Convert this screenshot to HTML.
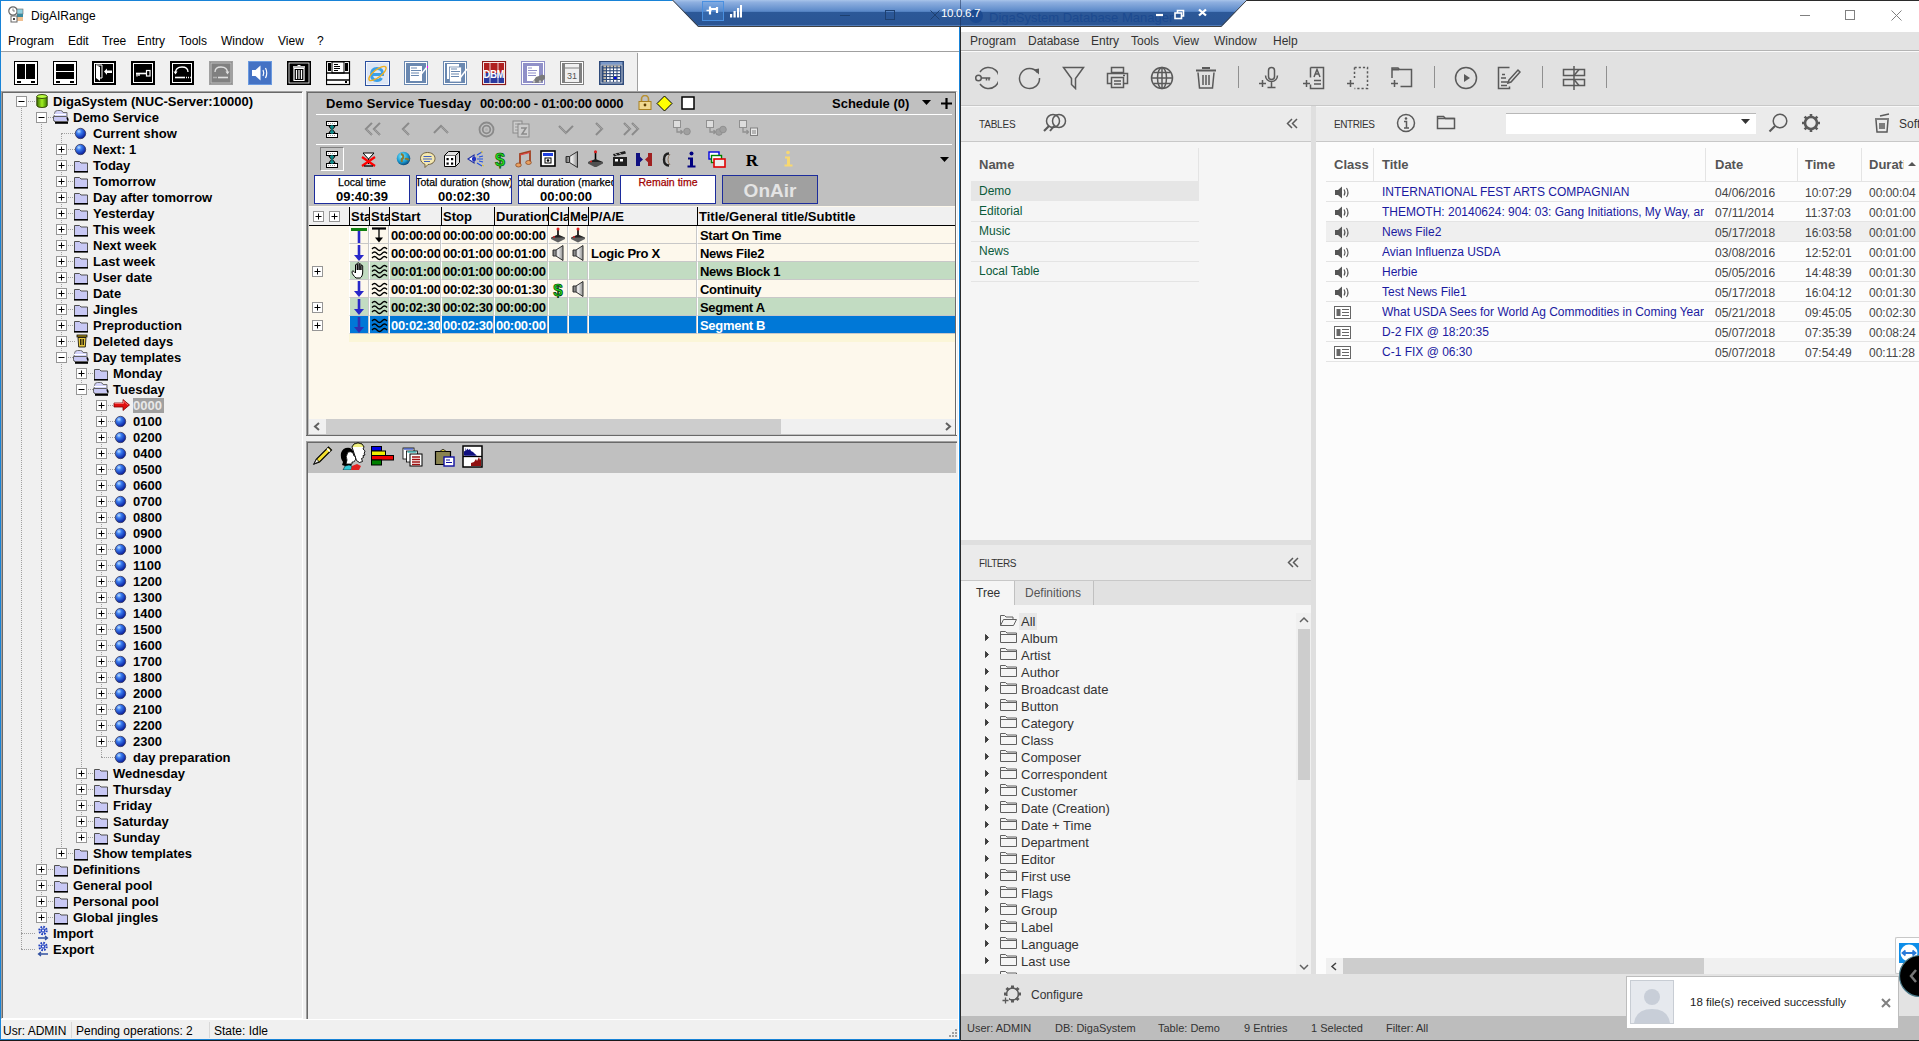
<!DOCTYPE html><html><head><meta charset="utf-8"><style>
html,body{margin:0;padding:0;}
body{width:1919px;height:1041px;overflow:hidden;position:relative;background:#fff;font-family:"Liberation Sans",sans-serif;}
div{position:absolute;box-sizing:border-box;}
.t{white-space:pre;}
</style></head><body><div style="left:0px;top:0px;width:961px;height:1041px;background:#f0f0f0;"></div><div style="left:1px;top:1px;width:959px;height:50px;background:#fff;"></div><div style="left:1px;top:51px;width:959px;height:1px;background:#a0a0a0;"></div><div style="left:1px;top:52px;width:636px;height:39px;background:#f0f0f0;"></div><div style="left:637px;top:53px;width:1px;height:38px;background:#a0a0a0;"></div><div style="left:638px;top:52px;width:321px;height:39px;background:#fff;"></div><div style="left:0px;top:0px;width:1px;height:1041px;background:#1883d7;"></div><div style="left:0px;top:0px;width:961px;height:1px;background:#1883d7;"></div><div style="left:958px;top:52px;width:1px;height:988px;background:#fff;"></div><div style="left:959px;top:0px;width:1px;height:1040px;background:#1883d7;"></div><div style="left:960px;top:0px;width:1px;height:1041px;background:#2a2a2a;"></div><div style="left:0px;top:1039px;width:960px;height:1px;background:#1883d7;"></div><div style="left:0px;top:1040px;width:960px;height:1px;background:#1a1a1a;"></div><div class="t" style="left:31px;top:9.84px;font-size:12px;line-height:12px;color:#000;">DigAIRange</div><div class="t" style="left:8px;top:34.84px;font-size:12px;line-height:12px;color:#000;">Program</div><div class="t" style="left:68px;top:34.84px;font-size:12px;line-height:12px;color:#000;">Edit</div><div class="t" style="left:102px;top:34.84px;font-size:12px;line-height:12px;color:#000;">Tree</div><div class="t" style="left:137px;top:34.84px;font-size:12px;line-height:12px;color:#000;">Entry</div><div class="t" style="left:179px;top:34.84px;font-size:12px;line-height:12px;color:#000;">Tools</div><div class="t" style="left:221px;top:34.84px;font-size:12px;line-height:12px;color:#000;">Window</div><div class="t" style="left:278px;top:34.84px;font-size:12px;line-height:12px;color:#000;">View</div><div class="t" style="left:317px;top:34.84px;font-size:12px;line-height:12px;color:#000;">?</div><div style="left:1px;top:91px;width:302px;height:928px;background:#f0f0f0;border-top:1px solid #a0a0a0;border-left:1px solid #a0a0a0;border-right:1px solid #fff;border-bottom:1px solid #fff;"></div><div style="left:2px;top:92px;width:300px;height:926px;border-top:1px solid #696969;border-left:1px solid #696969;"></div><div style="left:21px;top:101px;width:1px;height:848px;border-left:1px dotted #a0a0a0;"></div><div style="left:41px;top:117px;width:1px;height:800px;border-left:1px dotted #a0a0a0;"></div><div style="left:61px;top:133px;width:1px;height:720px;border-left:1px dotted #a0a0a0;"></div><div style="left:81px;top:373px;width:1px;height:464px;border-left:1px dotted #a0a0a0;"></div><div style="left:101px;top:405px;width:1px;height:352px;border-left:1px dotted #a0a0a0;"></div><div style="left:21px;top:101px;width:14px;height:1px;border-top:1px dotted #a0a0a0;"></div><svg style="position:absolute;left:16px;top:96px;" width="11" height="11" viewBox="0 0 11 11"><rect x="0.5" y="0.5" width="10" height="10" fill="#fff" stroke="#969696"/><path d="M2.5 5.5h6" stroke="#000" stroke-width="1"/></svg><svg style="position:absolute;left:36px;top:94px;" width="12" height="14" viewBox="0 0 12 14"><defs><linearGradient id="cg" x1="0" x2="1"><stop offset="0" stop-color="#3a6a00"/><stop offset="0.5" stop-color="#a0f020"/><stop offset="1" stop-color="#3a7a00"/></linearGradient></defs><path d="M0.8 2.5 v9 a5.2 2 0 0 0 10.4 0 v-9" fill="url(#cg)" stroke="#2a3a00" stroke-width="0.9"/><ellipse cx="6" cy="2.5" rx="5.2" ry="2" fill="#b8ff40" stroke="#2a3a00" stroke-width="0.9"/></svg><div class="t" style="left:53px;top:95.00px;font-size:13px;line-height:13px;font-weight:bold;color:#000;">DigaSystem (NUC-Server:10000)</div><div style="left:41px;top:117px;width:14px;height:1px;border-top:1px dotted #a0a0a0;"></div><svg style="position:absolute;left:36px;top:112px;" width="11" height="11" viewBox="0 0 11 11"><rect x="0.5" y="0.5" width="10" height="10" fill="#fff" stroke="#969696"/><path d="M2.5 5.5h6" stroke="#000" stroke-width="1"/></svg><svg style="position:absolute;left:52px;top:109px;" width="18" height="15" viewBox="0 0 18 15"><path d="M2.5 4.5 q0-3 3-3 h3 q2 0 2.5 2 h4 v9 h-12.5 l-1-1.5z" fill="#d4d4fa" stroke="#707070" stroke-width="1"/><path d="M1.5 7.5 h13 l1.5 2 v3 h-13.5 l-1-2z" fill="#c8c8f4" stroke="#606060" stroke-width="1"/><path d="M2 5.5h12" stroke="#fff" stroke-width="1"/><rect x="3" y="13" width="13" height="1.8" fill="#000"/><path d="M15 8.5l1 3" stroke="#000" stroke-width="1.4"/></svg><div class="t" style="left:73px;top:111.00px;font-size:13px;line-height:13px;font-weight:bold;color:#000;">Demo Service</div><div style="left:61px;top:133px;width:14px;height:1px;border-top:1px dotted #a0a0a0;"></div><svg style="position:absolute;left:74px;top:127px;" width="13" height="13" viewBox="0 0 13 13"><defs><radialGradient id="bg" cx="0.35" cy="0.3" r="0.7"><stop offset="0" stop-color="#bfe0ff"/><stop offset="0.35" stop-color="#3a7cf0"/><stop offset="1" stop-color="#0a1f9c"/></radialGradient></defs><circle cx="6.5" cy="6.5" r="5.2" fill="url(#bg)" stroke="#3a3a5a" stroke-width="0.8"/></svg><div class="t" style="left:93px;top:127.00px;font-size:13px;line-height:13px;font-weight:bold;color:#000;">Current show</div><div style="left:61px;top:149px;width:14px;height:1px;border-top:1px dotted #a0a0a0;"></div><svg style="position:absolute;left:56px;top:144px;" width="11" height="11" viewBox="0 0 11 11"><rect x="0.5" y="0.5" width="10" height="10" fill="#fff" stroke="#969696"/><path d="M2.5 5.5h6M5.5 2.5v6" stroke="#000" stroke-width="1"/></svg><svg style="position:absolute;left:74px;top:143px;" width="13" height="13" viewBox="0 0 13 13"><defs><radialGradient id="bg" cx="0.35" cy="0.3" r="0.7"><stop offset="0" stop-color="#bfe0ff"/><stop offset="0.35" stop-color="#3a7cf0"/><stop offset="1" stop-color="#0a1f9c"/></radialGradient></defs><circle cx="6.5" cy="6.5" r="5.2" fill="url(#bg)" stroke="#3a3a5a" stroke-width="0.8"/></svg><div class="t" style="left:93px;top:143.00px;font-size:13px;line-height:13px;font-weight:bold;color:#000;">Next: 1</div><div style="left:61px;top:165px;width:14px;height:1px;border-top:1px dotted #a0a0a0;"></div><svg style="position:absolute;left:56px;top:160px;" width="11" height="11" viewBox="0 0 11 11"><rect x="0.5" y="0.5" width="10" height="10" fill="#fff" stroke="#969696"/><path d="M2.5 5.5h6M5.5 2.5v6" stroke="#000" stroke-width="1"/></svg><svg style="position:absolute;left:73px;top:159px;" width="16" height="14" viewBox="0 0 16 14"><path d="M1.5 2.5 h5 l1.5 1.5 h6.5 v8.5 h-13z" fill="#c8c8f4" stroke="#505050" stroke-width="1"/><rect x="1" y="12" width="14" height="1.6" fill="#000"/></svg><div class="t" style="left:93px;top:159.00px;font-size:13px;line-height:13px;font-weight:bold;color:#000;">Today</div><div style="left:61px;top:181px;width:14px;height:1px;border-top:1px dotted #a0a0a0;"></div><svg style="position:absolute;left:56px;top:176px;" width="11" height="11" viewBox="0 0 11 11"><rect x="0.5" y="0.5" width="10" height="10" fill="#fff" stroke="#969696"/><path d="M2.5 5.5h6M5.5 2.5v6" stroke="#000" stroke-width="1"/></svg><svg style="position:absolute;left:73px;top:175px;" width="16" height="14" viewBox="0 0 16 14"><path d="M1.5 2.5 h5 l1.5 1.5 h6.5 v8.5 h-13z" fill="#c8c8f4" stroke="#505050" stroke-width="1"/><rect x="1" y="12" width="14" height="1.6" fill="#000"/></svg><div class="t" style="left:93px;top:175.00px;font-size:13px;line-height:13px;font-weight:bold;color:#000;">Tomorrow</div><div style="left:61px;top:197px;width:14px;height:1px;border-top:1px dotted #a0a0a0;"></div><svg style="position:absolute;left:56px;top:192px;" width="11" height="11" viewBox="0 0 11 11"><rect x="0.5" y="0.5" width="10" height="10" fill="#fff" stroke="#969696"/><path d="M2.5 5.5h6M5.5 2.5v6" stroke="#000" stroke-width="1"/></svg><svg style="position:absolute;left:73px;top:191px;" width="16" height="14" viewBox="0 0 16 14"><path d="M1.5 2.5 h5 l1.5 1.5 h6.5 v8.5 h-13z" fill="#c8c8f4" stroke="#505050" stroke-width="1"/><rect x="1" y="12" width="14" height="1.6" fill="#000"/></svg><div class="t" style="left:93px;top:191.00px;font-size:13px;line-height:13px;font-weight:bold;color:#000;">Day after tomorrow</div><div style="left:61px;top:213px;width:14px;height:1px;border-top:1px dotted #a0a0a0;"></div><svg style="position:absolute;left:56px;top:208px;" width="11" height="11" viewBox="0 0 11 11"><rect x="0.5" y="0.5" width="10" height="10" fill="#fff" stroke="#969696"/><path d="M2.5 5.5h6M5.5 2.5v6" stroke="#000" stroke-width="1"/></svg><svg style="position:absolute;left:73px;top:207px;" width="16" height="14" viewBox="0 0 16 14"><path d="M1.5 2.5 h5 l1.5 1.5 h6.5 v8.5 h-13z" fill="#c8c8f4" stroke="#505050" stroke-width="1"/><rect x="1" y="12" width="14" height="1.6" fill="#000"/></svg><div class="t" style="left:93px;top:207.00px;font-size:13px;line-height:13px;font-weight:bold;color:#000;">Yesterday</div><div style="left:61px;top:229px;width:14px;height:1px;border-top:1px dotted #a0a0a0;"></div><svg style="position:absolute;left:56px;top:224px;" width="11" height="11" viewBox="0 0 11 11"><rect x="0.5" y="0.5" width="10" height="10" fill="#fff" stroke="#969696"/><path d="M2.5 5.5h6M5.5 2.5v6" stroke="#000" stroke-width="1"/></svg><svg style="position:absolute;left:73px;top:223px;" width="16" height="14" viewBox="0 0 16 14"><path d="M1.5 2.5 h5 l1.5 1.5 h6.5 v8.5 h-13z" fill="#c8c8f4" stroke="#505050" stroke-width="1"/><rect x="1" y="12" width="14" height="1.6" fill="#000"/></svg><div class="t" style="left:93px;top:223.00px;font-size:13px;line-height:13px;font-weight:bold;color:#000;">This week</div><div style="left:61px;top:245px;width:14px;height:1px;border-top:1px dotted #a0a0a0;"></div><svg style="position:absolute;left:56px;top:240px;" width="11" height="11" viewBox="0 0 11 11"><rect x="0.5" y="0.5" width="10" height="10" fill="#fff" stroke="#969696"/><path d="M2.5 5.5h6M5.5 2.5v6" stroke="#000" stroke-width="1"/></svg><svg style="position:absolute;left:73px;top:239px;" width="16" height="14" viewBox="0 0 16 14"><path d="M1.5 2.5 h5 l1.5 1.5 h6.5 v8.5 h-13z" fill="#c8c8f4" stroke="#505050" stroke-width="1"/><rect x="1" y="12" width="14" height="1.6" fill="#000"/></svg><div class="t" style="left:93px;top:239.00px;font-size:13px;line-height:13px;font-weight:bold;color:#000;">Next week</div><div style="left:61px;top:261px;width:14px;height:1px;border-top:1px dotted #a0a0a0;"></div><svg style="position:absolute;left:56px;top:256px;" width="11" height="11" viewBox="0 0 11 11"><rect x="0.5" y="0.5" width="10" height="10" fill="#fff" stroke="#969696"/><path d="M2.5 5.5h6M5.5 2.5v6" stroke="#000" stroke-width="1"/></svg><svg style="position:absolute;left:73px;top:255px;" width="16" height="14" viewBox="0 0 16 14"><path d="M1.5 2.5 h5 l1.5 1.5 h6.5 v8.5 h-13z" fill="#c8c8f4" stroke="#505050" stroke-width="1"/><rect x="1" y="12" width="14" height="1.6" fill="#000"/></svg><div class="t" style="left:93px;top:255.00px;font-size:13px;line-height:13px;font-weight:bold;color:#000;">Last week</div><div style="left:61px;top:277px;width:14px;height:1px;border-top:1px dotted #a0a0a0;"></div><svg style="position:absolute;left:56px;top:272px;" width="11" height="11" viewBox="0 0 11 11"><rect x="0.5" y="0.5" width="10" height="10" fill="#fff" stroke="#969696"/><path d="M2.5 5.5h6M5.5 2.5v6" stroke="#000" stroke-width="1"/></svg><svg style="position:absolute;left:73px;top:271px;" width="16" height="14" viewBox="0 0 16 14"><path d="M1.5 2.5 h5 l1.5 1.5 h6.5 v8.5 h-13z" fill="#c8c8f4" stroke="#505050" stroke-width="1"/><rect x="1" y="12" width="14" height="1.6" fill="#000"/></svg><div class="t" style="left:93px;top:271.00px;font-size:13px;line-height:13px;font-weight:bold;color:#000;">User date</div><div style="left:61px;top:293px;width:14px;height:1px;border-top:1px dotted #a0a0a0;"></div><svg style="position:absolute;left:56px;top:288px;" width="11" height="11" viewBox="0 0 11 11"><rect x="0.5" y="0.5" width="10" height="10" fill="#fff" stroke="#969696"/><path d="M2.5 5.5h6M5.5 2.5v6" stroke="#000" stroke-width="1"/></svg><svg style="position:absolute;left:73px;top:287px;" width="16" height="14" viewBox="0 0 16 14"><path d="M1.5 2.5 h5 l1.5 1.5 h6.5 v8.5 h-13z" fill="#c8c8f4" stroke="#505050" stroke-width="1"/><rect x="1" y="12" width="14" height="1.6" fill="#000"/></svg><div class="t" style="left:93px;top:287.00px;font-size:13px;line-height:13px;font-weight:bold;color:#000;">Date</div><div style="left:61px;top:309px;width:14px;height:1px;border-top:1px dotted #a0a0a0;"></div><svg style="position:absolute;left:56px;top:304px;" width="11" height="11" viewBox="0 0 11 11"><rect x="0.5" y="0.5" width="10" height="10" fill="#fff" stroke="#969696"/><path d="M2.5 5.5h6M5.5 2.5v6" stroke="#000" stroke-width="1"/></svg><svg style="position:absolute;left:73px;top:303px;" width="16" height="14" viewBox="0 0 16 14"><path d="M1.5 2.5 h5 l1.5 1.5 h6.5 v8.5 h-13z" fill="#c8c8f4" stroke="#505050" stroke-width="1"/><rect x="1" y="12" width="14" height="1.6" fill="#000"/></svg><div class="t" style="left:93px;top:303.00px;font-size:13px;line-height:13px;font-weight:bold;color:#000;">Jingles</div><div style="left:61px;top:325px;width:14px;height:1px;border-top:1px dotted #a0a0a0;"></div><svg style="position:absolute;left:56px;top:320px;" width="11" height="11" viewBox="0 0 11 11"><rect x="0.5" y="0.5" width="10" height="10" fill="#fff" stroke="#969696"/><path d="M2.5 5.5h6M5.5 2.5v6" stroke="#000" stroke-width="1"/></svg><svg style="position:absolute;left:73px;top:319px;" width="16" height="14" viewBox="0 0 16 14"><path d="M1.5 2.5 h5 l1.5 1.5 h6.5 v8.5 h-13z" fill="#c8c8f4" stroke="#505050" stroke-width="1"/><rect x="1" y="12" width="14" height="1.6" fill="#000"/></svg><div class="t" style="left:93px;top:319.00px;font-size:13px;line-height:13px;font-weight:bold;color:#000;">Preproduction</div><div style="left:61px;top:341px;width:14px;height:1px;border-top:1px dotted #a0a0a0;"></div><svg style="position:absolute;left:56px;top:336px;" width="11" height="11" viewBox="0 0 11 11"><rect x="0.5" y="0.5" width="10" height="10" fill="#fff" stroke="#969696"/><path d="M2.5 5.5h6M5.5 2.5v6" stroke="#000" stroke-width="1"/></svg><svg style="position:absolute;left:76px;top:334px;" width="12" height="14" viewBox="0 0 12 14"><rect x="1" y="1" width="10" height="2" fill="#c0a020" stroke="#000" stroke-width="0.8"/><path d="M2 3.5 h8 l-0.7 9.5 h-6.6z" fill="#e8c840" stroke="#000" stroke-width="0.8"/><path d="M4.5 5v6M6 5v6M7.5 5v6" stroke="#000" stroke-width="0.8"/></svg><div class="t" style="left:93px;top:335.00px;font-size:13px;line-height:13px;font-weight:bold;color:#000;">Deleted days</div><div style="left:61px;top:357px;width:14px;height:1px;border-top:1px dotted #a0a0a0;"></div><svg style="position:absolute;left:56px;top:352px;" width="11" height="11" viewBox="0 0 11 11"><rect x="0.5" y="0.5" width="10" height="10" fill="#fff" stroke="#969696"/><path d="M2.5 5.5h6" stroke="#000" stroke-width="1"/></svg><svg style="position:absolute;left:72px;top:349px;" width="18" height="15" viewBox="0 0 18 15"><path d="M2.5 4.5 q0-3 3-3 h3 q2 0 2.5 2 h4 v9 h-12.5 l-1-1.5z" fill="#d4d4fa" stroke="#707070" stroke-width="1"/><path d="M1.5 7.5 h13 l1.5 2 v3 h-13.5 l-1-2z" fill="#c8c8f4" stroke="#606060" stroke-width="1"/><path d="M2 5.5h12" stroke="#fff" stroke-width="1"/><rect x="3" y="13" width="13" height="1.8" fill="#000"/><path d="M15 8.5l1 3" stroke="#000" stroke-width="1.4"/></svg><div class="t" style="left:93px;top:351.00px;font-size:13px;line-height:13px;font-weight:bold;color:#000;">Day templates</div><div style="left:81px;top:373px;width:14px;height:1px;border-top:1px dotted #a0a0a0;"></div><svg style="position:absolute;left:76px;top:368px;" width="11" height="11" viewBox="0 0 11 11"><rect x="0.5" y="0.5" width="10" height="10" fill="#fff" stroke="#969696"/><path d="M2.5 5.5h6M5.5 2.5v6" stroke="#000" stroke-width="1"/></svg><svg style="position:absolute;left:93px;top:367px;" width="16" height="14" viewBox="0 0 16 14"><path d="M1.5 2.5 h5 l1.5 1.5 h6.5 v8.5 h-13z" fill="#c8c8f4" stroke="#505050" stroke-width="1"/><rect x="1" y="12" width="14" height="1.6" fill="#000"/></svg><div class="t" style="left:113px;top:367.00px;font-size:13px;line-height:13px;font-weight:bold;color:#000;">Monday</div><div style="left:81px;top:389px;width:14px;height:1px;border-top:1px dotted #a0a0a0;"></div><svg style="position:absolute;left:76px;top:384px;" width="11" height="11" viewBox="0 0 11 11"><rect x="0.5" y="0.5" width="10" height="10" fill="#fff" stroke="#969696"/><path d="M2.5 5.5h6" stroke="#000" stroke-width="1"/></svg><svg style="position:absolute;left:92px;top:381px;" width="18" height="15" viewBox="0 0 18 15"><path d="M2.5 4.5 q0-3 3-3 h3 q2 0 2.5 2 h4 v9 h-12.5 l-1-1.5z" fill="#d4d4fa" stroke="#707070" stroke-width="1"/><path d="M1.5 7.5 h13 l1.5 2 v3 h-13.5 l-1-2z" fill="#c8c8f4" stroke="#606060" stroke-width="1"/><path d="M2 5.5h12" stroke="#fff" stroke-width="1"/><rect x="3" y="13" width="13" height="1.8" fill="#000"/><path d="M15 8.5l1 3" stroke="#000" stroke-width="1.4"/></svg><div class="t" style="left:113px;top:383.00px;font-size:13px;line-height:13px;font-weight:bold;color:#000;">Tuesday</div><div style="left:101px;top:405px;width:14px;height:1px;border-top:1px dotted #a0a0a0;"></div><svg style="position:absolute;left:96px;top:400px;" width="11" height="11" viewBox="0 0 11 11"><rect x="0.5" y="0.5" width="10" height="10" fill="#fff" stroke="#969696"/><path d="M2.5 5.5h6M5.5 2.5v6" stroke="#000" stroke-width="1"/></svg><svg style="position:absolute;left:113px;top:399px;" width="18" height="12" viewBox="0 0 18 12"><path d="M1 4 h9 v-3.5 l6.5 5.5 l-6.5 5.5 v-3.5 h-9z" fill="#e01010" stroke="#800000" stroke-width="0.8"/><path d="M1.5 4.5 h9 v-2.5 l4.5 4" fill="none" stroke="#ff8080" stroke-width="0.8"/></svg><div style="left:133px;top:398px;width:31px;height:15px;background:#a0a0a0;"></div><div class="t" style="left:133px;top:399.00px;font-size:13px;line-height:13px;font-weight:bold;color:#e8e8e8;">0000</div><div style="left:101px;top:421px;width:14px;height:1px;border-top:1px dotted #a0a0a0;"></div><svg style="position:absolute;left:96px;top:416px;" width="11" height="11" viewBox="0 0 11 11"><rect x="0.5" y="0.5" width="10" height="10" fill="#fff" stroke="#969696"/><path d="M2.5 5.5h6M5.5 2.5v6" stroke="#000" stroke-width="1"/></svg><svg style="position:absolute;left:114px;top:415px;" width="13" height="13" viewBox="0 0 13 13"><defs><radialGradient id="bg" cx="0.35" cy="0.3" r="0.7"><stop offset="0" stop-color="#bfe0ff"/><stop offset="0.35" stop-color="#3a7cf0"/><stop offset="1" stop-color="#0a1f9c"/></radialGradient></defs><circle cx="6.5" cy="6.5" r="5.2" fill="url(#bg)" stroke="#3a3a5a" stroke-width="0.8"/></svg><div class="t" style="left:133px;top:415.00px;font-size:13px;line-height:13px;font-weight:bold;color:#000;">0100</div><div style="left:101px;top:437px;width:14px;height:1px;border-top:1px dotted #a0a0a0;"></div><svg style="position:absolute;left:96px;top:432px;" width="11" height="11" viewBox="0 0 11 11"><rect x="0.5" y="0.5" width="10" height="10" fill="#fff" stroke="#969696"/><path d="M2.5 5.5h6M5.5 2.5v6" stroke="#000" stroke-width="1"/></svg><svg style="position:absolute;left:114px;top:431px;" width="13" height="13" viewBox="0 0 13 13"><defs><radialGradient id="bg" cx="0.35" cy="0.3" r="0.7"><stop offset="0" stop-color="#bfe0ff"/><stop offset="0.35" stop-color="#3a7cf0"/><stop offset="1" stop-color="#0a1f9c"/></radialGradient></defs><circle cx="6.5" cy="6.5" r="5.2" fill="url(#bg)" stroke="#3a3a5a" stroke-width="0.8"/></svg><div class="t" style="left:133px;top:431.00px;font-size:13px;line-height:13px;font-weight:bold;color:#000;">0200</div><div style="left:101px;top:453px;width:14px;height:1px;border-top:1px dotted #a0a0a0;"></div><svg style="position:absolute;left:96px;top:448px;" width="11" height="11" viewBox="0 0 11 11"><rect x="0.5" y="0.5" width="10" height="10" fill="#fff" stroke="#969696"/><path d="M2.5 5.5h6M5.5 2.5v6" stroke="#000" stroke-width="1"/></svg><svg style="position:absolute;left:114px;top:447px;" width="13" height="13" viewBox="0 0 13 13"><defs><radialGradient id="bg" cx="0.35" cy="0.3" r="0.7"><stop offset="0" stop-color="#bfe0ff"/><stop offset="0.35" stop-color="#3a7cf0"/><stop offset="1" stop-color="#0a1f9c"/></radialGradient></defs><circle cx="6.5" cy="6.5" r="5.2" fill="url(#bg)" stroke="#3a3a5a" stroke-width="0.8"/></svg><div class="t" style="left:133px;top:447.00px;font-size:13px;line-height:13px;font-weight:bold;color:#000;">0400</div><div style="left:101px;top:469px;width:14px;height:1px;border-top:1px dotted #a0a0a0;"></div><svg style="position:absolute;left:96px;top:464px;" width="11" height="11" viewBox="0 0 11 11"><rect x="0.5" y="0.5" width="10" height="10" fill="#fff" stroke="#969696"/><path d="M2.5 5.5h6M5.5 2.5v6" stroke="#000" stroke-width="1"/></svg><svg style="position:absolute;left:114px;top:463px;" width="13" height="13" viewBox="0 0 13 13"><defs><radialGradient id="bg" cx="0.35" cy="0.3" r="0.7"><stop offset="0" stop-color="#bfe0ff"/><stop offset="0.35" stop-color="#3a7cf0"/><stop offset="1" stop-color="#0a1f9c"/></radialGradient></defs><circle cx="6.5" cy="6.5" r="5.2" fill="url(#bg)" stroke="#3a3a5a" stroke-width="0.8"/></svg><div class="t" style="left:133px;top:463.00px;font-size:13px;line-height:13px;font-weight:bold;color:#000;">0500</div><div style="left:101px;top:485px;width:14px;height:1px;border-top:1px dotted #a0a0a0;"></div><svg style="position:absolute;left:96px;top:480px;" width="11" height="11" viewBox="0 0 11 11"><rect x="0.5" y="0.5" width="10" height="10" fill="#fff" stroke="#969696"/><path d="M2.5 5.5h6M5.5 2.5v6" stroke="#000" stroke-width="1"/></svg><svg style="position:absolute;left:114px;top:479px;" width="13" height="13" viewBox="0 0 13 13"><defs><radialGradient id="bg" cx="0.35" cy="0.3" r="0.7"><stop offset="0" stop-color="#bfe0ff"/><stop offset="0.35" stop-color="#3a7cf0"/><stop offset="1" stop-color="#0a1f9c"/></radialGradient></defs><circle cx="6.5" cy="6.5" r="5.2" fill="url(#bg)" stroke="#3a3a5a" stroke-width="0.8"/></svg><div class="t" style="left:133px;top:479.00px;font-size:13px;line-height:13px;font-weight:bold;color:#000;">0600</div><div style="left:101px;top:501px;width:14px;height:1px;border-top:1px dotted #a0a0a0;"></div><svg style="position:absolute;left:96px;top:496px;" width="11" height="11" viewBox="0 0 11 11"><rect x="0.5" y="0.5" width="10" height="10" fill="#fff" stroke="#969696"/><path d="M2.5 5.5h6M5.5 2.5v6" stroke="#000" stroke-width="1"/></svg><svg style="position:absolute;left:114px;top:495px;" width="13" height="13" viewBox="0 0 13 13"><defs><radialGradient id="bg" cx="0.35" cy="0.3" r="0.7"><stop offset="0" stop-color="#bfe0ff"/><stop offset="0.35" stop-color="#3a7cf0"/><stop offset="1" stop-color="#0a1f9c"/></radialGradient></defs><circle cx="6.5" cy="6.5" r="5.2" fill="url(#bg)" stroke="#3a3a5a" stroke-width="0.8"/></svg><div class="t" style="left:133px;top:495.00px;font-size:13px;line-height:13px;font-weight:bold;color:#000;">0700</div><div style="left:101px;top:517px;width:14px;height:1px;border-top:1px dotted #a0a0a0;"></div><svg style="position:absolute;left:96px;top:512px;" width="11" height="11" viewBox="0 0 11 11"><rect x="0.5" y="0.5" width="10" height="10" fill="#fff" stroke="#969696"/><path d="M2.5 5.5h6M5.5 2.5v6" stroke="#000" stroke-width="1"/></svg><svg style="position:absolute;left:114px;top:511px;" width="13" height="13" viewBox="0 0 13 13"><defs><radialGradient id="bg" cx="0.35" cy="0.3" r="0.7"><stop offset="0" stop-color="#bfe0ff"/><stop offset="0.35" stop-color="#3a7cf0"/><stop offset="1" stop-color="#0a1f9c"/></radialGradient></defs><circle cx="6.5" cy="6.5" r="5.2" fill="url(#bg)" stroke="#3a3a5a" stroke-width="0.8"/></svg><div class="t" style="left:133px;top:511.00px;font-size:13px;line-height:13px;font-weight:bold;color:#000;">0800</div><div style="left:101px;top:533px;width:14px;height:1px;border-top:1px dotted #a0a0a0;"></div><svg style="position:absolute;left:96px;top:528px;" width="11" height="11" viewBox="0 0 11 11"><rect x="0.5" y="0.5" width="10" height="10" fill="#fff" stroke="#969696"/><path d="M2.5 5.5h6M5.5 2.5v6" stroke="#000" stroke-width="1"/></svg><svg style="position:absolute;left:114px;top:527px;" width="13" height="13" viewBox="0 0 13 13"><defs><radialGradient id="bg" cx="0.35" cy="0.3" r="0.7"><stop offset="0" stop-color="#bfe0ff"/><stop offset="0.35" stop-color="#3a7cf0"/><stop offset="1" stop-color="#0a1f9c"/></radialGradient></defs><circle cx="6.5" cy="6.5" r="5.2" fill="url(#bg)" stroke="#3a3a5a" stroke-width="0.8"/></svg><div class="t" style="left:133px;top:527.00px;font-size:13px;line-height:13px;font-weight:bold;color:#000;">0900</div><div style="left:101px;top:549px;width:14px;height:1px;border-top:1px dotted #a0a0a0;"></div><svg style="position:absolute;left:96px;top:544px;" width="11" height="11" viewBox="0 0 11 11"><rect x="0.5" y="0.5" width="10" height="10" fill="#fff" stroke="#969696"/><path d="M2.5 5.5h6M5.5 2.5v6" stroke="#000" stroke-width="1"/></svg><svg style="position:absolute;left:114px;top:543px;" width="13" height="13" viewBox="0 0 13 13"><defs><radialGradient id="bg" cx="0.35" cy="0.3" r="0.7"><stop offset="0" stop-color="#bfe0ff"/><stop offset="0.35" stop-color="#3a7cf0"/><stop offset="1" stop-color="#0a1f9c"/></radialGradient></defs><circle cx="6.5" cy="6.5" r="5.2" fill="url(#bg)" stroke="#3a3a5a" stroke-width="0.8"/></svg><div class="t" style="left:133px;top:543.00px;font-size:13px;line-height:13px;font-weight:bold;color:#000;">1000</div><div style="left:101px;top:565px;width:14px;height:1px;border-top:1px dotted #a0a0a0;"></div><svg style="position:absolute;left:96px;top:560px;" width="11" height="11" viewBox="0 0 11 11"><rect x="0.5" y="0.5" width="10" height="10" fill="#fff" stroke="#969696"/><path d="M2.5 5.5h6M5.5 2.5v6" stroke="#000" stroke-width="1"/></svg><svg style="position:absolute;left:114px;top:559px;" width="13" height="13" viewBox="0 0 13 13"><defs><radialGradient id="bg" cx="0.35" cy="0.3" r="0.7"><stop offset="0" stop-color="#bfe0ff"/><stop offset="0.35" stop-color="#3a7cf0"/><stop offset="1" stop-color="#0a1f9c"/></radialGradient></defs><circle cx="6.5" cy="6.5" r="5.2" fill="url(#bg)" stroke="#3a3a5a" stroke-width="0.8"/></svg><div class="t" style="left:133px;top:559.00px;font-size:13px;line-height:13px;font-weight:bold;color:#000;">1100</div><div style="left:101px;top:581px;width:14px;height:1px;border-top:1px dotted #a0a0a0;"></div><svg style="position:absolute;left:96px;top:576px;" width="11" height="11" viewBox="0 0 11 11"><rect x="0.5" y="0.5" width="10" height="10" fill="#fff" stroke="#969696"/><path d="M2.5 5.5h6M5.5 2.5v6" stroke="#000" stroke-width="1"/></svg><svg style="position:absolute;left:114px;top:575px;" width="13" height="13" viewBox="0 0 13 13"><defs><radialGradient id="bg" cx="0.35" cy="0.3" r="0.7"><stop offset="0" stop-color="#bfe0ff"/><stop offset="0.35" stop-color="#3a7cf0"/><stop offset="1" stop-color="#0a1f9c"/></radialGradient></defs><circle cx="6.5" cy="6.5" r="5.2" fill="url(#bg)" stroke="#3a3a5a" stroke-width="0.8"/></svg><div class="t" style="left:133px;top:575.00px;font-size:13px;line-height:13px;font-weight:bold;color:#000;">1200</div><div style="left:101px;top:597px;width:14px;height:1px;border-top:1px dotted #a0a0a0;"></div><svg style="position:absolute;left:96px;top:592px;" width="11" height="11" viewBox="0 0 11 11"><rect x="0.5" y="0.5" width="10" height="10" fill="#fff" stroke="#969696"/><path d="M2.5 5.5h6M5.5 2.5v6" stroke="#000" stroke-width="1"/></svg><svg style="position:absolute;left:114px;top:591px;" width="13" height="13" viewBox="0 0 13 13"><defs><radialGradient id="bg" cx="0.35" cy="0.3" r="0.7"><stop offset="0" stop-color="#bfe0ff"/><stop offset="0.35" stop-color="#3a7cf0"/><stop offset="1" stop-color="#0a1f9c"/></radialGradient></defs><circle cx="6.5" cy="6.5" r="5.2" fill="url(#bg)" stroke="#3a3a5a" stroke-width="0.8"/></svg><div class="t" style="left:133px;top:591.00px;font-size:13px;line-height:13px;font-weight:bold;color:#000;">1300</div><div style="left:101px;top:613px;width:14px;height:1px;border-top:1px dotted #a0a0a0;"></div><svg style="position:absolute;left:96px;top:608px;" width="11" height="11" viewBox="0 0 11 11"><rect x="0.5" y="0.5" width="10" height="10" fill="#fff" stroke="#969696"/><path d="M2.5 5.5h6M5.5 2.5v6" stroke="#000" stroke-width="1"/></svg><svg style="position:absolute;left:114px;top:607px;" width="13" height="13" viewBox="0 0 13 13"><defs><radialGradient id="bg" cx="0.35" cy="0.3" r="0.7"><stop offset="0" stop-color="#bfe0ff"/><stop offset="0.35" stop-color="#3a7cf0"/><stop offset="1" stop-color="#0a1f9c"/></radialGradient></defs><circle cx="6.5" cy="6.5" r="5.2" fill="url(#bg)" stroke="#3a3a5a" stroke-width="0.8"/></svg><div class="t" style="left:133px;top:607.00px;font-size:13px;line-height:13px;font-weight:bold;color:#000;">1400</div><div style="left:101px;top:629px;width:14px;height:1px;border-top:1px dotted #a0a0a0;"></div><svg style="position:absolute;left:96px;top:624px;" width="11" height="11" viewBox="0 0 11 11"><rect x="0.5" y="0.5" width="10" height="10" fill="#fff" stroke="#969696"/><path d="M2.5 5.5h6M5.5 2.5v6" stroke="#000" stroke-width="1"/></svg><svg style="position:absolute;left:114px;top:623px;" width="13" height="13" viewBox="0 0 13 13"><defs><radialGradient id="bg" cx="0.35" cy="0.3" r="0.7"><stop offset="0" stop-color="#bfe0ff"/><stop offset="0.35" stop-color="#3a7cf0"/><stop offset="1" stop-color="#0a1f9c"/></radialGradient></defs><circle cx="6.5" cy="6.5" r="5.2" fill="url(#bg)" stroke="#3a3a5a" stroke-width="0.8"/></svg><div class="t" style="left:133px;top:623.00px;font-size:13px;line-height:13px;font-weight:bold;color:#000;">1500</div><div style="left:101px;top:645px;width:14px;height:1px;border-top:1px dotted #a0a0a0;"></div><svg style="position:absolute;left:96px;top:640px;" width="11" height="11" viewBox="0 0 11 11"><rect x="0.5" y="0.5" width="10" height="10" fill="#fff" stroke="#969696"/><path d="M2.5 5.5h6M5.5 2.5v6" stroke="#000" stroke-width="1"/></svg><svg style="position:absolute;left:114px;top:639px;" width="13" height="13" viewBox="0 0 13 13"><defs><radialGradient id="bg" cx="0.35" cy="0.3" r="0.7"><stop offset="0" stop-color="#bfe0ff"/><stop offset="0.35" stop-color="#3a7cf0"/><stop offset="1" stop-color="#0a1f9c"/></radialGradient></defs><circle cx="6.5" cy="6.5" r="5.2" fill="url(#bg)" stroke="#3a3a5a" stroke-width="0.8"/></svg><div class="t" style="left:133px;top:639.00px;font-size:13px;line-height:13px;font-weight:bold;color:#000;">1600</div><div style="left:101px;top:661px;width:14px;height:1px;border-top:1px dotted #a0a0a0;"></div><svg style="position:absolute;left:96px;top:656px;" width="11" height="11" viewBox="0 0 11 11"><rect x="0.5" y="0.5" width="10" height="10" fill="#fff" stroke="#969696"/><path d="M2.5 5.5h6M5.5 2.5v6" stroke="#000" stroke-width="1"/></svg><svg style="position:absolute;left:114px;top:655px;" width="13" height="13" viewBox="0 0 13 13"><defs><radialGradient id="bg" cx="0.35" cy="0.3" r="0.7"><stop offset="0" stop-color="#bfe0ff"/><stop offset="0.35" stop-color="#3a7cf0"/><stop offset="1" stop-color="#0a1f9c"/></radialGradient></defs><circle cx="6.5" cy="6.5" r="5.2" fill="url(#bg)" stroke="#3a3a5a" stroke-width="0.8"/></svg><div class="t" style="left:133px;top:655.00px;font-size:13px;line-height:13px;font-weight:bold;color:#000;">1700</div><div style="left:101px;top:677px;width:14px;height:1px;border-top:1px dotted #a0a0a0;"></div><svg style="position:absolute;left:96px;top:672px;" width="11" height="11" viewBox="0 0 11 11"><rect x="0.5" y="0.5" width="10" height="10" fill="#fff" stroke="#969696"/><path d="M2.5 5.5h6M5.5 2.5v6" stroke="#000" stroke-width="1"/></svg><svg style="position:absolute;left:114px;top:671px;" width="13" height="13" viewBox="0 0 13 13"><defs><radialGradient id="bg" cx="0.35" cy="0.3" r="0.7"><stop offset="0" stop-color="#bfe0ff"/><stop offset="0.35" stop-color="#3a7cf0"/><stop offset="1" stop-color="#0a1f9c"/></radialGradient></defs><circle cx="6.5" cy="6.5" r="5.2" fill="url(#bg)" stroke="#3a3a5a" stroke-width="0.8"/></svg><div class="t" style="left:133px;top:671.00px;font-size:13px;line-height:13px;font-weight:bold;color:#000;">1800</div><div style="left:101px;top:693px;width:14px;height:1px;border-top:1px dotted #a0a0a0;"></div><svg style="position:absolute;left:96px;top:688px;" width="11" height="11" viewBox="0 0 11 11"><rect x="0.5" y="0.5" width="10" height="10" fill="#fff" stroke="#969696"/><path d="M2.5 5.5h6M5.5 2.5v6" stroke="#000" stroke-width="1"/></svg><svg style="position:absolute;left:114px;top:687px;" width="13" height="13" viewBox="0 0 13 13"><defs><radialGradient id="bg" cx="0.35" cy="0.3" r="0.7"><stop offset="0" stop-color="#bfe0ff"/><stop offset="0.35" stop-color="#3a7cf0"/><stop offset="1" stop-color="#0a1f9c"/></radialGradient></defs><circle cx="6.5" cy="6.5" r="5.2" fill="url(#bg)" stroke="#3a3a5a" stroke-width="0.8"/></svg><div class="t" style="left:133px;top:687.00px;font-size:13px;line-height:13px;font-weight:bold;color:#000;">2000</div><div style="left:101px;top:709px;width:14px;height:1px;border-top:1px dotted #a0a0a0;"></div><svg style="position:absolute;left:96px;top:704px;" width="11" height="11" viewBox="0 0 11 11"><rect x="0.5" y="0.5" width="10" height="10" fill="#fff" stroke="#969696"/><path d="M2.5 5.5h6M5.5 2.5v6" stroke="#000" stroke-width="1"/></svg><svg style="position:absolute;left:114px;top:703px;" width="13" height="13" viewBox="0 0 13 13"><defs><radialGradient id="bg" cx="0.35" cy="0.3" r="0.7"><stop offset="0" stop-color="#bfe0ff"/><stop offset="0.35" stop-color="#3a7cf0"/><stop offset="1" stop-color="#0a1f9c"/></radialGradient></defs><circle cx="6.5" cy="6.5" r="5.2" fill="url(#bg)" stroke="#3a3a5a" stroke-width="0.8"/></svg><div class="t" style="left:133px;top:703.00px;font-size:13px;line-height:13px;font-weight:bold;color:#000;">2100</div><div style="left:101px;top:725px;width:14px;height:1px;border-top:1px dotted #a0a0a0;"></div><svg style="position:absolute;left:96px;top:720px;" width="11" height="11" viewBox="0 0 11 11"><rect x="0.5" y="0.5" width="10" height="10" fill="#fff" stroke="#969696"/><path d="M2.5 5.5h6M5.5 2.5v6" stroke="#000" stroke-width="1"/></svg><svg style="position:absolute;left:114px;top:719px;" width="13" height="13" viewBox="0 0 13 13"><defs><radialGradient id="bg" cx="0.35" cy="0.3" r="0.7"><stop offset="0" stop-color="#bfe0ff"/><stop offset="0.35" stop-color="#3a7cf0"/><stop offset="1" stop-color="#0a1f9c"/></radialGradient></defs><circle cx="6.5" cy="6.5" r="5.2" fill="url(#bg)" stroke="#3a3a5a" stroke-width="0.8"/></svg><div class="t" style="left:133px;top:719.00px;font-size:13px;line-height:13px;font-weight:bold;color:#000;">2200</div><div style="left:101px;top:741px;width:14px;height:1px;border-top:1px dotted #a0a0a0;"></div><svg style="position:absolute;left:96px;top:736px;" width="11" height="11" viewBox="0 0 11 11"><rect x="0.5" y="0.5" width="10" height="10" fill="#fff" stroke="#969696"/><path d="M2.5 5.5h6M5.5 2.5v6" stroke="#000" stroke-width="1"/></svg><svg style="position:absolute;left:114px;top:735px;" width="13" height="13" viewBox="0 0 13 13"><defs><radialGradient id="bg" cx="0.35" cy="0.3" r="0.7"><stop offset="0" stop-color="#bfe0ff"/><stop offset="0.35" stop-color="#3a7cf0"/><stop offset="1" stop-color="#0a1f9c"/></radialGradient></defs><circle cx="6.5" cy="6.5" r="5.2" fill="url(#bg)" stroke="#3a3a5a" stroke-width="0.8"/></svg><div class="t" style="left:133px;top:735.00px;font-size:13px;line-height:13px;font-weight:bold;color:#000;">2300</div><div style="left:101px;top:757px;width:14px;height:1px;border-top:1px dotted #a0a0a0;"></div><svg style="position:absolute;left:114px;top:751px;" width="13" height="13" viewBox="0 0 13 13"><defs><radialGradient id="bg" cx="0.35" cy="0.3" r="0.7"><stop offset="0" stop-color="#bfe0ff"/><stop offset="0.35" stop-color="#3a7cf0"/><stop offset="1" stop-color="#0a1f9c"/></radialGradient></defs><circle cx="6.5" cy="6.5" r="5.2" fill="url(#bg)" stroke="#3a3a5a" stroke-width="0.8"/></svg><div class="t" style="left:133px;top:751.00px;font-size:13px;line-height:13px;font-weight:bold;color:#000;">day preparation</div><div style="left:81px;top:773px;width:14px;height:1px;border-top:1px dotted #a0a0a0;"></div><svg style="position:absolute;left:76px;top:768px;" width="11" height="11" viewBox="0 0 11 11"><rect x="0.5" y="0.5" width="10" height="10" fill="#fff" stroke="#969696"/><path d="M2.5 5.5h6M5.5 2.5v6" stroke="#000" stroke-width="1"/></svg><svg style="position:absolute;left:93px;top:767px;" width="16" height="14" viewBox="0 0 16 14"><path d="M1.5 2.5 h5 l1.5 1.5 h6.5 v8.5 h-13z" fill="#c8c8f4" stroke="#505050" stroke-width="1"/><rect x="1" y="12" width="14" height="1.6" fill="#000"/></svg><div class="t" style="left:113px;top:767.00px;font-size:13px;line-height:13px;font-weight:bold;color:#000;">Wednesday</div><div style="left:81px;top:789px;width:14px;height:1px;border-top:1px dotted #a0a0a0;"></div><svg style="position:absolute;left:76px;top:784px;" width="11" height="11" viewBox="0 0 11 11"><rect x="0.5" y="0.5" width="10" height="10" fill="#fff" stroke="#969696"/><path d="M2.5 5.5h6M5.5 2.5v6" stroke="#000" stroke-width="1"/></svg><svg style="position:absolute;left:93px;top:783px;" width="16" height="14" viewBox="0 0 16 14"><path d="M1.5 2.5 h5 l1.5 1.5 h6.5 v8.5 h-13z" fill="#c8c8f4" stroke="#505050" stroke-width="1"/><rect x="1" y="12" width="14" height="1.6" fill="#000"/></svg><div class="t" style="left:113px;top:783.00px;font-size:13px;line-height:13px;font-weight:bold;color:#000;">Thursday</div><div style="left:81px;top:805px;width:14px;height:1px;border-top:1px dotted #a0a0a0;"></div><svg style="position:absolute;left:76px;top:800px;" width="11" height="11" viewBox="0 0 11 11"><rect x="0.5" y="0.5" width="10" height="10" fill="#fff" stroke="#969696"/><path d="M2.5 5.5h6M5.5 2.5v6" stroke="#000" stroke-width="1"/></svg><svg style="position:absolute;left:93px;top:799px;" width="16" height="14" viewBox="0 0 16 14"><path d="M1.5 2.5 h5 l1.5 1.5 h6.5 v8.5 h-13z" fill="#c8c8f4" stroke="#505050" stroke-width="1"/><rect x="1" y="12" width="14" height="1.6" fill="#000"/></svg><div class="t" style="left:113px;top:799.00px;font-size:13px;line-height:13px;font-weight:bold;color:#000;">Friday</div><div style="left:81px;top:821px;width:14px;height:1px;border-top:1px dotted #a0a0a0;"></div><svg style="position:absolute;left:76px;top:816px;" width="11" height="11" viewBox="0 0 11 11"><rect x="0.5" y="0.5" width="10" height="10" fill="#fff" stroke="#969696"/><path d="M2.5 5.5h6M5.5 2.5v6" stroke="#000" stroke-width="1"/></svg><svg style="position:absolute;left:93px;top:815px;" width="16" height="14" viewBox="0 0 16 14"><path d="M1.5 2.5 h5 l1.5 1.5 h6.5 v8.5 h-13z" fill="#c8c8f4" stroke="#505050" stroke-width="1"/><rect x="1" y="12" width="14" height="1.6" fill="#000"/></svg><div class="t" style="left:113px;top:815.00px;font-size:13px;line-height:13px;font-weight:bold;color:#000;">Saturday</div><div style="left:81px;top:837px;width:14px;height:1px;border-top:1px dotted #a0a0a0;"></div><svg style="position:absolute;left:76px;top:832px;" width="11" height="11" viewBox="0 0 11 11"><rect x="0.5" y="0.5" width="10" height="10" fill="#fff" stroke="#969696"/><path d="M2.5 5.5h6M5.5 2.5v6" stroke="#000" stroke-width="1"/></svg><svg style="position:absolute;left:93px;top:831px;" width="16" height="14" viewBox="0 0 16 14"><path d="M1.5 2.5 h5 l1.5 1.5 h6.5 v8.5 h-13z" fill="#c8c8f4" stroke="#505050" stroke-width="1"/><rect x="1" y="12" width="14" height="1.6" fill="#000"/></svg><div class="t" style="left:113px;top:831.00px;font-size:13px;line-height:13px;font-weight:bold;color:#000;">Sunday</div><div style="left:61px;top:853px;width:14px;height:1px;border-top:1px dotted #a0a0a0;"></div><svg style="position:absolute;left:56px;top:848px;" width="11" height="11" viewBox="0 0 11 11"><rect x="0.5" y="0.5" width="10" height="10" fill="#fff" stroke="#969696"/><path d="M2.5 5.5h6M5.5 2.5v6" stroke="#000" stroke-width="1"/></svg><svg style="position:absolute;left:73px;top:847px;" width="16" height="14" viewBox="0 0 16 14"><path d="M1.5 2.5 h5 l1.5 1.5 h6.5 v8.5 h-13z" fill="#c8c8f4" stroke="#505050" stroke-width="1"/><rect x="1" y="12" width="14" height="1.6" fill="#000"/></svg><div class="t" style="left:93px;top:847.00px;font-size:13px;line-height:13px;font-weight:bold;color:#000;">Show templates</div><div style="left:41px;top:869px;width:14px;height:1px;border-top:1px dotted #a0a0a0;"></div><svg style="position:absolute;left:36px;top:864px;" width="11" height="11" viewBox="0 0 11 11"><rect x="0.5" y="0.5" width="10" height="10" fill="#fff" stroke="#969696"/><path d="M2.5 5.5h6M5.5 2.5v6" stroke="#000" stroke-width="1"/></svg><svg style="position:absolute;left:53px;top:863px;" width="16" height="14" viewBox="0 0 16 14"><path d="M1.5 2.5 h5 l1.5 1.5 h6.5 v8.5 h-13z" fill="#c8c8f4" stroke="#505050" stroke-width="1"/><rect x="1" y="12" width="14" height="1.6" fill="#000"/></svg><div class="t" style="left:73px;top:863.00px;font-size:13px;line-height:13px;font-weight:bold;color:#000;">Definitions</div><div style="left:41px;top:885px;width:14px;height:1px;border-top:1px dotted #a0a0a0;"></div><svg style="position:absolute;left:36px;top:880px;" width="11" height="11" viewBox="0 0 11 11"><rect x="0.5" y="0.5" width="10" height="10" fill="#fff" stroke="#969696"/><path d="M2.5 5.5h6M5.5 2.5v6" stroke="#000" stroke-width="1"/></svg><svg style="position:absolute;left:53px;top:879px;" width="16" height="14" viewBox="0 0 16 14"><path d="M1.5 2.5 h5 l1.5 1.5 h6.5 v8.5 h-13z" fill="#c8c8f4" stroke="#505050" stroke-width="1"/><rect x="1" y="12" width="14" height="1.6" fill="#000"/></svg><div class="t" style="left:73px;top:879.00px;font-size:13px;line-height:13px;font-weight:bold;color:#000;">General pool</div><div style="left:41px;top:901px;width:14px;height:1px;border-top:1px dotted #a0a0a0;"></div><svg style="position:absolute;left:36px;top:896px;" width="11" height="11" viewBox="0 0 11 11"><rect x="0.5" y="0.5" width="10" height="10" fill="#fff" stroke="#969696"/><path d="M2.5 5.5h6M5.5 2.5v6" stroke="#000" stroke-width="1"/></svg><svg style="position:absolute;left:53px;top:895px;" width="16" height="14" viewBox="0 0 16 14"><path d="M1.5 2.5 h5 l1.5 1.5 h6.5 v8.5 h-13z" fill="#c8c8f4" stroke="#505050" stroke-width="1"/><rect x="1" y="12" width="14" height="1.6" fill="#000"/></svg><div class="t" style="left:73px;top:895.00px;font-size:13px;line-height:13px;font-weight:bold;color:#000;">Personal pool</div><div style="left:41px;top:917px;width:14px;height:1px;border-top:1px dotted #a0a0a0;"></div><svg style="position:absolute;left:36px;top:912px;" width="11" height="11" viewBox="0 0 11 11"><rect x="0.5" y="0.5" width="10" height="10" fill="#fff" stroke="#969696"/><path d="M2.5 5.5h6M5.5 2.5v6" stroke="#000" stroke-width="1"/></svg><svg style="position:absolute;left:53px;top:911px;" width="16" height="14" viewBox="0 0 16 14"><path d="M1.5 2.5 h5 l1.5 1.5 h6.5 v8.5 h-13z" fill="#c8c8f4" stroke="#505050" stroke-width="1"/><rect x="1" y="12" width="14" height="1.6" fill="#000"/></svg><div class="t" style="left:73px;top:911.00px;font-size:13px;line-height:13px;font-weight:bold;color:#000;">Global jingles</div><div style="left:21px;top:933px;width:14px;height:1px;border-top:1px dotted #a0a0a0;"></div><svg style="position:absolute;left:36px;top:925px;" width="14" height="16" viewBox="0 0 14 16"><circle cx="7" cy="5.5" r="3.6" fill="none" stroke="#2040c0" stroke-width="2.2" stroke-dasharray="1.6 1.2"/><circle cx="7" cy="5.5" r="2.2" fill="#2040c0"/><circle cx="7" cy="5.5" r="1" fill="#fff"/><path d="M2 13 h9 M9 11 l2.5 2 l-2.5 2" stroke="#3050a0" stroke-width="1.3" fill="none"/></svg><div class="t" style="left:53px;top:927.00px;font-size:13px;line-height:13px;font-weight:bold;color:#000;">Import</div><div style="left:21px;top:949px;width:14px;height:1px;border-top:1px dotted #a0a0a0;"></div><svg style="position:absolute;left:36px;top:941px;" width="14" height="16" viewBox="0 0 14 16"><circle cx="7" cy="5.5" r="3.6" fill="none" stroke="#2040c0" stroke-width="2.2" stroke-dasharray="1.6 1.2"/><circle cx="7" cy="5.5" r="2.2" fill="#2040c0"/><circle cx="7" cy="5.5" r="1" fill="#fff"/><path d="M3 13 h9 M5 11 l-2.5 2 l2.5 2" stroke="#3050a0" stroke-width="1.3" fill="none"/></svg><div class="t" style="left:53px;top:943.00px;font-size:13px;line-height:13px;font-weight:bold;color:#000;">Export</div><div style="left:306px;top:91px;width:651px;height:345px;background:#c0c0c0;border-top:1px solid #a0a0a0;border-left:1px solid #a0a0a0;border-right:1px solid #fff;"></div><div style="left:307px;top:92px;width:649px;height:344px;border-top:1px solid #696969;border-left:1px solid #696969;"></div><div class="t" style="left:326px;top:97.00px;font-size:13px;line-height:13px;font-weight:bold;color:#000;letter-spacing:0.2px;">Demo Service Tuesday</div><div class="t" style="left:480px;top:97.00px;font-size:13px;line-height:13px;font-weight:bold;color:#000;letter-spacing:-0.2px;">00:00:00 - 01:00:00 0000</div><div class="t" style="left:832px;top:97.00px;font-size:13px;line-height:13px;font-weight:bold;color:#000;">Schedule (0)</div><div style="left:316px;top:114px;width:636px;height:1px;background:#fff;"></div><div style="left:316px;top:144px;width:636px;height:1px;background:#fff;"></div><div style="left:314px;top:175px;width:96px;height:29px;background:#fff;border:1px solid #1c2c9c;overflow:hidden;"><div class="t" style="left:-50px;top:1.11px;font-size:10.5px;line-height:10.5px;color:#000;width:194px;text-align:center;-webkit-text-stroke:0.25px #000;">Local time</div><div class="t" style="left:0px;top:13.50px;font-size:13px;line-height:13px;font-weight:bold;color:#000;width:94px;text-align:center;">09:40:39</div></div><div style="left:416px;top:175px;width:96px;height:29px;background:#fff;border:1px solid #1c2c9c;overflow:hidden;"><div class="t" style="left:-50px;top:1.11px;font-size:10.5px;line-height:10.5px;color:#000;width:194px;text-align:center;-webkit-text-stroke:0.25px #000;">Total duration (show)</div><div class="t" style="left:0px;top:13.50px;font-size:13px;line-height:13px;font-weight:bold;color:#000;width:94px;text-align:center;">00:02:30</div></div><div style="left:518px;top:175px;width:96px;height:29px;background:#fff;border:1px solid #1c2c9c;overflow:hidden;"><div class="t" style="left:-50px;top:1.11px;font-size:10.5px;line-height:10.5px;color:#000;width:194px;text-align:center;-webkit-text-stroke:0.25px #000;">Total duration (marked)</div><div class="t" style="left:0px;top:13.50px;font-size:13px;line-height:13px;font-weight:bold;color:#000;width:94px;text-align:center;">00:00:00</div></div><div style="left:620px;top:175px;width:96px;height:29px;background:#fff;border:1px solid #1c2c9c;overflow:hidden;"><div class="t" style="left:-50px;top:1.11px;font-size:10.5px;line-height:10.5px;color:#a00000;width:194px;text-align:center;-webkit-text-stroke:0.25px #a00000;">Remain time</div></div><div style="left:722px;top:175px;width:96px;height:29px;background:#a0a0a0;border:1px solid #1c2c9c;"><div class="t" style="left:0px;top:4.92px;font-size:19px;line-height:19px;font-weight:bold;color:#e4e4e4;width:94px;text-align:center;">OnAir</div></div><div style="left:309px;top:206px;width:647px;height:213px;background:#fdf8ec;"></div><div style="left:309px;top:207px;width:647px;height:19px;background:#f0f0f0;border-bottom:1px solid #000;"></div><svg style="position:absolute;left:313px;top:211px;" width="11" height="11" viewBox="0 0 11 11"><rect x="0.5" y="0.5" width="10" height="10" fill="#fff" stroke="#969696"/><path d="M2.5 5.5h6M5.5 2.5v6" stroke="#000" stroke-width="1"/></svg><svg style="position:absolute;left:329px;top:211px;" width="11" height="11" viewBox="0 0 11 11"><rect x="0.5" y="0.5" width="10" height="10" fill="#fff" stroke="#969696"/><path d="M2.5 5.5h6M5.5 2.5v6" stroke="#000" stroke-width="1"/></svg><div style="left:349px;top:207px;width:20px;height:18px;border-left:1px solid #000;overflow:hidden;background:#f0f0f0;"><div class="t" style="left:1px;top:3.00px;font-size:13px;line-height:13px;font-weight:bold;color:#000;">Sta</div></div><div style="left:369px;top:207px;width:20px;height:18px;border-left:1px solid #000;overflow:hidden;background:#f0f0f0;"><div class="t" style="left:1px;top:3.00px;font-size:13px;line-height:13px;font-weight:bold;color:#000;">Sta</div></div><div style="left:389px;top:207px;width:52px;height:18px;border-left:1px solid #000;overflow:hidden;background:#f0f0f0;"><div class="t" style="left:1px;top:3.00px;font-size:13px;line-height:13px;font-weight:bold;color:#000;">Start</div></div><div style="left:441px;top:207px;width:53px;height:18px;border-left:1px solid #000;overflow:hidden;background:#f0f0f0;"><div class="t" style="left:1px;top:3.00px;font-size:13px;line-height:13px;font-weight:bold;color:#000;">Stop</div></div><div style="left:494px;top:207px;width:54px;height:18px;border-left:1px solid #000;overflow:hidden;background:#f0f0f0;"><div class="t" style="left:1px;top:3.00px;font-size:13px;line-height:13px;font-weight:bold;color:#000;">Duration</div></div><div style="left:548px;top:207px;width:20px;height:18px;border-left:1px solid #000;overflow:hidden;background:#f0f0f0;"><div class="t" style="left:1px;top:3.00px;font-size:13px;line-height:13px;font-weight:bold;color:#000;">Cla</div></div><div style="left:568px;top:207px;width:20px;height:18px;border-left:1px solid #000;overflow:hidden;background:#f0f0f0;"><div class="t" style="left:1px;top:3.00px;font-size:13px;line-height:13px;font-weight:bold;color:#000;">Me</div></div><div style="left:588px;top:207px;width:109px;height:18px;border-left:1px solid #000;overflow:hidden;background:#f0f0f0;"><div class="t" style="left:1px;top:3.00px;font-size:13px;line-height:13px;font-weight:bold;color:#000;">P/A/E</div></div><div style="left:697px;top:207px;width:259px;height:18px;border-left:1px solid #000;overflow:hidden;background:#f0f0f0;"><div class="t" style="left:1px;top:3.00px;font-size:13px;line-height:13px;font-weight:bold;color:#000;">Title/General title/Subtitle</div></div><div style="left:349px;top:226px;width:20px;height:18px;background:#fdf8ec;border-left:1px solid #fff;border-right:1px solid #c8c8c8;border-bottom:1px solid #c8c8c8;overflow:hidden;"></div><div style="left:369px;top:226px;width:20px;height:18px;background:#fdf8ec;border-left:1px solid #fff;border-right:1px solid #c8c8c8;border-bottom:1px solid #c8c8c8;overflow:hidden;"></div><div style="left:389px;top:226px;width:52px;height:18px;background:#fdf8ec;border-left:1px solid #fff;border-right:1px solid #c8c8c8;border-bottom:1px solid #c8c8c8;overflow:hidden;"><div class="t" style="left:1px;top:3.00px;font-size:13px;line-height:13px;font-weight:bold;color:#000;letter-spacing:-0.3px;">00:00:00</div></div><div style="left:441px;top:226px;width:53px;height:18px;background:#fdf8ec;border-left:1px solid #fff;border-right:1px solid #c8c8c8;border-bottom:1px solid #c8c8c8;overflow:hidden;"><div class="t" style="left:1px;top:3.00px;font-size:13px;line-height:13px;font-weight:bold;color:#000;letter-spacing:-0.3px;">00:00:00</div></div><div style="left:494px;top:226px;width:54px;height:18px;background:#fdf8ec;border-left:1px solid #fff;border-right:1px solid #c8c8c8;border-bottom:1px solid #c8c8c8;overflow:hidden;"><div class="t" style="left:1px;top:3.00px;font-size:13px;line-height:13px;font-weight:bold;color:#000;letter-spacing:-0.3px;">00:00:00</div></div><div style="left:548px;top:226px;width:20px;height:18px;background:#fdf8ec;border-left:1px solid #fff;border-right:1px solid #c8c8c8;border-bottom:1px solid #c8c8c8;overflow:hidden;"></div><div style="left:568px;top:226px;width:20px;height:18px;background:#fdf8ec;border-left:1px solid #fff;border-right:1px solid #c8c8c8;border-bottom:1px solid #c8c8c8;overflow:hidden;"></div><div style="left:588px;top:226px;width:109px;height:18px;background:#fdf8ec;border-left:1px solid #fff;border-right:1px solid #c8c8c8;border-bottom:1px solid #c8c8c8;overflow:hidden;"></div><div style="left:697px;top:226px;width:259px;height:18px;background:#fdf8ec;border-left:1px solid #fff;border-right:1px solid #c8c8c8;border-bottom:1px solid #c8c8c8;overflow:hidden;"><div class="t" style="left:2px;top:3.00px;font-size:13px;line-height:13px;font-weight:bold;color:#000;letter-spacing:-0.3px;">Start On Time</div></div><div style="left:349px;top:244px;width:20px;height:18px;background:#fdf8ec;border-left:1px solid #fff;border-right:1px solid #c8c8c8;border-bottom:1px solid #c8c8c8;overflow:hidden;"></div><div style="left:369px;top:244px;width:20px;height:18px;background:#fdf8ec;border-left:1px solid #fff;border-right:1px solid #c8c8c8;border-bottom:1px solid #c8c8c8;overflow:hidden;"></div><div style="left:389px;top:244px;width:52px;height:18px;background:#fdf8ec;border-left:1px solid #fff;border-right:1px solid #c8c8c8;border-bottom:1px solid #c8c8c8;overflow:hidden;"><div class="t" style="left:1px;top:3.00px;font-size:13px;line-height:13px;font-weight:bold;color:#000;letter-spacing:-0.3px;">00:00:00</div></div><div style="left:441px;top:244px;width:53px;height:18px;background:#fdf8ec;border-left:1px solid #fff;border-right:1px solid #c8c8c8;border-bottom:1px solid #c8c8c8;overflow:hidden;"><div class="t" style="left:1px;top:3.00px;font-size:13px;line-height:13px;font-weight:bold;color:#000;letter-spacing:-0.3px;">00:01:00</div></div><div style="left:494px;top:244px;width:54px;height:18px;background:#fdf8ec;border-left:1px solid #fff;border-right:1px solid #c8c8c8;border-bottom:1px solid #c8c8c8;overflow:hidden;"><div class="t" style="left:1px;top:3.00px;font-size:13px;line-height:13px;font-weight:bold;color:#000;letter-spacing:-0.3px;">00:01:00</div></div><div style="left:548px;top:244px;width:20px;height:18px;background:#fdf8ec;border-left:1px solid #fff;border-right:1px solid #c8c8c8;border-bottom:1px solid #c8c8c8;overflow:hidden;"></div><div style="left:568px;top:244px;width:20px;height:18px;background:#fdf8ec;border-left:1px solid #fff;border-right:1px solid #c8c8c8;border-bottom:1px solid #c8c8c8;overflow:hidden;"></div><div style="left:588px;top:244px;width:109px;height:18px;background:#fdf8ec;border-left:1px solid #fff;border-right:1px solid #c8c8c8;border-bottom:1px solid #c8c8c8;overflow:hidden;"><div class="t" style="left:2px;top:3.00px;font-size:13px;line-height:13px;font-weight:bold;color:#000;letter-spacing:-0.3px;">Logic Pro X</div></div><div style="left:697px;top:244px;width:259px;height:18px;background:#fdf8ec;border-left:1px solid #fff;border-right:1px solid #c8c8c8;border-bottom:1px solid #c8c8c8;overflow:hidden;"><div class="t" style="left:2px;top:3.00px;font-size:13px;line-height:13px;font-weight:bold;color:#000;letter-spacing:-0.3px;">News File2</div></div><div style="left:349px;top:262px;width:20px;height:18px;background:#c2dcc2;border-left:1px solid #fff;border-right:1px solid #c8c8c8;border-bottom:1px solid #c8c8c8;overflow:hidden;"></div><div style="left:369px;top:262px;width:20px;height:18px;background:#c2dcc2;border-left:1px solid #fff;border-right:1px solid #c8c8c8;border-bottom:1px solid #c8c8c8;overflow:hidden;"></div><div style="left:389px;top:262px;width:52px;height:18px;background:#c2dcc2;border-left:1px solid #fff;border-right:1px solid #c8c8c8;border-bottom:1px solid #c8c8c8;overflow:hidden;"><div class="t" style="left:1px;top:3.00px;font-size:13px;line-height:13px;font-weight:bold;color:#000;letter-spacing:-0.3px;">00:01:00</div></div><div style="left:441px;top:262px;width:53px;height:18px;background:#c2dcc2;border-left:1px solid #fff;border-right:1px solid #c8c8c8;border-bottom:1px solid #c8c8c8;overflow:hidden;"><div class="t" style="left:1px;top:3.00px;font-size:13px;line-height:13px;font-weight:bold;color:#000;letter-spacing:-0.3px;">00:01:00</div></div><div style="left:494px;top:262px;width:54px;height:18px;background:#c2dcc2;border-left:1px solid #fff;border-right:1px solid #c8c8c8;border-bottom:1px solid #c8c8c8;overflow:hidden;"><div class="t" style="left:1px;top:3.00px;font-size:13px;line-height:13px;font-weight:bold;color:#000;letter-spacing:-0.3px;">00:00:00</div></div><div style="left:548px;top:262px;width:20px;height:18px;background:#c2dcc2;border-left:1px solid #fff;border-right:1px solid #c8c8c8;border-bottom:1px solid #c8c8c8;overflow:hidden;"></div><div style="left:568px;top:262px;width:20px;height:18px;background:#c2dcc2;border-left:1px solid #fff;border-right:1px solid #c8c8c8;border-bottom:1px solid #c8c8c8;overflow:hidden;"></div><div style="left:588px;top:262px;width:109px;height:18px;background:#c2dcc2;border-left:1px solid #fff;border-right:1px solid #c8c8c8;border-bottom:1px solid #c8c8c8;overflow:hidden;"></div><div style="left:697px;top:262px;width:259px;height:18px;background:#c2dcc2;border-left:1px solid #fff;border-right:1px solid #c8c8c8;border-bottom:1px solid #c8c8c8;overflow:hidden;"><div class="t" style="left:2px;top:3.00px;font-size:13px;line-height:13px;font-weight:bold;color:#000;letter-spacing:-0.3px;">News Block 1</div></div><svg style="position:absolute;left:312px;top:266px;" width="11" height="11" viewBox="0 0 11 11"><rect x="0.5" y="0.5" width="10" height="10" fill="#fff" stroke="#969696"/><path d="M2.5 5.5h6M5.5 2.5v6" stroke="#000" stroke-width="1"/></svg><div style="left:349px;top:280px;width:20px;height:18px;background:#fdf8ec;border-left:1px solid #fff;border-right:1px solid #c8c8c8;border-bottom:1px solid #c8c8c8;overflow:hidden;"></div><div style="left:369px;top:280px;width:20px;height:18px;background:#fdf8ec;border-left:1px solid #fff;border-right:1px solid #c8c8c8;border-bottom:1px solid #c8c8c8;overflow:hidden;"></div><div style="left:389px;top:280px;width:52px;height:18px;background:#fdf8ec;border-left:1px solid #fff;border-right:1px solid #c8c8c8;border-bottom:1px solid #c8c8c8;overflow:hidden;"><div class="t" style="left:1px;top:3.00px;font-size:13px;line-height:13px;font-weight:bold;color:#000;letter-spacing:-0.3px;">00:01:00</div></div><div style="left:441px;top:280px;width:53px;height:18px;background:#fdf8ec;border-left:1px solid #fff;border-right:1px solid #c8c8c8;border-bottom:1px solid #c8c8c8;overflow:hidden;"><div class="t" style="left:1px;top:3.00px;font-size:13px;line-height:13px;font-weight:bold;color:#000;letter-spacing:-0.3px;">00:02:30</div></div><div style="left:494px;top:280px;width:54px;height:18px;background:#fdf8ec;border-left:1px solid #fff;border-right:1px solid #c8c8c8;border-bottom:1px solid #c8c8c8;overflow:hidden;"><div class="t" style="left:1px;top:3.00px;font-size:13px;line-height:13px;font-weight:bold;color:#000;letter-spacing:-0.3px;">00:01:30</div></div><div style="left:548px;top:280px;width:20px;height:18px;background:#fdf8ec;border-left:1px solid #fff;border-right:1px solid #c8c8c8;border-bottom:1px solid #c8c8c8;overflow:hidden;"></div><div style="left:568px;top:280px;width:20px;height:18px;background:#fdf8ec;border-left:1px solid #fff;border-right:1px solid #c8c8c8;border-bottom:1px solid #c8c8c8;overflow:hidden;"></div><div style="left:588px;top:280px;width:109px;height:18px;background:#fdf8ec;border-left:1px solid #fff;border-right:1px solid #c8c8c8;border-bottom:1px solid #c8c8c8;overflow:hidden;"></div><div style="left:697px;top:280px;width:259px;height:18px;background:#fdf8ec;border-left:1px solid #fff;border-right:1px solid #c8c8c8;border-bottom:1px solid #c8c8c8;overflow:hidden;"><div class="t" style="left:2px;top:3.00px;font-size:13px;line-height:13px;font-weight:bold;color:#000;letter-spacing:-0.3px;">Continuity</div></div><div style="left:349px;top:298px;width:20px;height:18px;background:#c2dcc2;border-left:1px solid #fff;border-right:1px solid #c8c8c8;border-bottom:1px solid #c8c8c8;overflow:hidden;"></div><div style="left:369px;top:298px;width:20px;height:18px;background:#c2dcc2;border-left:1px solid #fff;border-right:1px solid #c8c8c8;border-bottom:1px solid #c8c8c8;overflow:hidden;"></div><div style="left:389px;top:298px;width:52px;height:18px;background:#c2dcc2;border-left:1px solid #fff;border-right:1px solid #c8c8c8;border-bottom:1px solid #c8c8c8;overflow:hidden;"><div class="t" style="left:1px;top:3.00px;font-size:13px;line-height:13px;font-weight:bold;color:#000;letter-spacing:-0.3px;">00:02:30</div></div><div style="left:441px;top:298px;width:53px;height:18px;background:#c2dcc2;border-left:1px solid #fff;border-right:1px solid #c8c8c8;border-bottom:1px solid #c8c8c8;overflow:hidden;"><div class="t" style="left:1px;top:3.00px;font-size:13px;line-height:13px;font-weight:bold;color:#000;letter-spacing:-0.3px;">00:02:30</div></div><div style="left:494px;top:298px;width:54px;height:18px;background:#c2dcc2;border-left:1px solid #fff;border-right:1px solid #c8c8c8;border-bottom:1px solid #c8c8c8;overflow:hidden;"><div class="t" style="left:1px;top:3.00px;font-size:13px;line-height:13px;font-weight:bold;color:#000;letter-spacing:-0.3px;">00:00:00</div></div><div style="left:548px;top:298px;width:20px;height:18px;background:#c2dcc2;border-left:1px solid #fff;border-right:1px solid #c8c8c8;border-bottom:1px solid #c8c8c8;overflow:hidden;"></div><div style="left:568px;top:298px;width:20px;height:18px;background:#c2dcc2;border-left:1px solid #fff;border-right:1px solid #c8c8c8;border-bottom:1px solid #c8c8c8;overflow:hidden;"></div><div style="left:588px;top:298px;width:109px;height:18px;background:#c2dcc2;border-left:1px solid #fff;border-right:1px solid #c8c8c8;border-bottom:1px solid #c8c8c8;overflow:hidden;"></div><div style="left:697px;top:298px;width:259px;height:18px;background:#c2dcc2;border-left:1px solid #fff;border-right:1px solid #c8c8c8;border-bottom:1px solid #c8c8c8;overflow:hidden;"><div class="t" style="left:2px;top:3.00px;font-size:13px;line-height:13px;font-weight:bold;color:#000;letter-spacing:-0.3px;">Segment A</div></div><svg style="position:absolute;left:312px;top:302px;" width="11" height="11" viewBox="0 0 11 11"><rect x="0.5" y="0.5" width="10" height="10" fill="#fff" stroke="#969696"/><path d="M2.5 5.5h6M5.5 2.5v6" stroke="#000" stroke-width="1"/></svg><div style="left:349px;top:316px;width:20px;height:18px;background:#0078d7;border-left:1px solid #fff;border-right:1px solid #c8c8c8;border-bottom:1px solid #c8c8c8;overflow:hidden;"></div><div style="left:369px;top:316px;width:20px;height:18px;background:#0078d7;border-left:1px solid #fff;border-right:1px solid #c8c8c8;border-bottom:1px solid #c8c8c8;overflow:hidden;"></div><div style="left:389px;top:316px;width:52px;height:18px;background:#0078d7;border-left:1px solid #fff;border-right:1px solid #c8c8c8;border-bottom:1px solid #c8c8c8;overflow:hidden;"><div class="t" style="left:1px;top:3.00px;font-size:13px;line-height:13px;font-weight:bold;color:#fff;letter-spacing:-0.3px;">00:02:30</div></div><div style="left:441px;top:316px;width:53px;height:18px;background:#0078d7;border-left:1px solid #fff;border-right:1px solid #c8c8c8;border-bottom:1px solid #c8c8c8;overflow:hidden;"><div class="t" style="left:1px;top:3.00px;font-size:13px;line-height:13px;font-weight:bold;color:#fff;letter-spacing:-0.3px;">00:02:30</div></div><div style="left:494px;top:316px;width:54px;height:18px;background:#0078d7;border-left:1px solid #fff;border-right:1px solid #c8c8c8;border-bottom:1px solid #c8c8c8;overflow:hidden;"><div class="t" style="left:1px;top:3.00px;font-size:13px;line-height:13px;font-weight:bold;color:#fff;letter-spacing:-0.3px;">00:00:00</div></div><div style="left:548px;top:316px;width:20px;height:18px;background:#0078d7;border-left:1px solid #fff;border-right:1px solid #c8c8c8;border-bottom:1px solid #c8c8c8;overflow:hidden;"></div><div style="left:568px;top:316px;width:20px;height:18px;background:#0078d7;border-left:1px solid #fff;border-right:1px solid #c8c8c8;border-bottom:1px solid #c8c8c8;overflow:hidden;"></div><div style="left:588px;top:316px;width:109px;height:18px;background:#0078d7;border-left:1px solid #fff;border-right:1px solid #c8c8c8;border-bottom:1px solid #c8c8c8;overflow:hidden;"></div><div style="left:697px;top:316px;width:259px;height:18px;background:#0078d7;border-left:1px solid #fff;border-right:1px solid #c8c8c8;border-bottom:1px solid #c8c8c8;overflow:hidden;"><div class="t" style="left:2px;top:3.00px;font-size:13px;line-height:13px;font-weight:bold;color:#fff;letter-spacing:-0.3px;">Segment B</div></div><svg style="position:absolute;left:312px;top:320px;" width="11" height="11" viewBox="0 0 11 11"><rect x="0.5" y="0.5" width="10" height="10" fill="#fff" stroke="#969696"/><path d="M2.5 5.5h6M5.5 2.5v6" stroke="#000" stroke-width="1"/></svg><div style="left:349px;top:334px;width:607px;height:8px;background:#fbf6d8;"></div><div style="left:309px;top:419px;width:647px;height:15px;background:#f0f0f0;"></div><div style="left:326px;top:419px;width:455px;height:15px;background:#cdcdcd;"></div><svg style="position:absolute;left:313px;top:422px;" width="8" height="9" viewBox="0 0 8 9"><path d="M6 1 L2 4.5 L6 8" fill="none" stroke="#606060" stroke-width="2"/></svg><svg style="position:absolute;left:944px;top:422px;" width="8" height="9" viewBox="0 0 8 9"><path d="M2 1 L6 4.5 L2 8" fill="none" stroke="#606060" stroke-width="2"/></svg><div style="left:306px;top:435px;width:651px;height:1px;background:#696969;"></div><div style="left:955px;top:92px;width:1px;height:344px;background:#696969;"></div><div style="left:306px;top:441px;width:651px;height:578px;background:#f0f0f0;border-top:1px solid #a0a0a0;border-left:1px solid #a0a0a0;"></div><div style="left:307px;top:442px;width:650px;height:577px;border-top:1px solid #696969;border-left:1px solid #696969;"></div><div style="left:308px;top:443px;width:648px;height:30px;background:#c0c0c0;"></div><svg style="position:absolute;left:638px;top:95px;" width="14" height="15" viewBox="0 0 14 15"><path d="M3.5 6.5v-2.5a3.5 3.5 0 0 1 7 0v2.5" fill="none" stroke="#b89030" stroke-width="1.6"/><rect x="1" y="6.5" width="12" height="8" fill="#f0d890" stroke="#a88020" stroke-width="1"/><circle cx="7" cy="10" r="1.4" fill="#604000"/></svg><svg style="position:absolute;left:656px;top:95px;" width="17" height="17" viewBox="0 0 17 17"><path d="M8.5 1L16 8.5L8.5 16L1 8.5z" fill="#ffff00" stroke="#000" stroke-width="1"/></svg><svg style="position:absolute;left:681px;top:96px;" width="14" height="14" viewBox="0 0 14 14"><rect x="1" y="1" width="12" height="12" fill="#fff" stroke="#000" stroke-width="1.5"/></svg><svg style="position:absolute;left:922px;top:100px;" width="10" height="6" viewBox="0 0 10 6"><path d="M0 0h9l-4.5 5z" fill="#000"/></svg><svg style="position:absolute;left:940px;top:97px;" width="13" height="13" viewBox="0 0 13 13"><path d="M6.5 1v11M1 6.5h11" stroke="#000" stroke-width="2.2"/></svg><svg style="position:absolute;left:326px;top:121px;" width="12" height="17" viewBox="0 0 12 17"><rect x="0.5" y="0.5" width="11" height="4" fill="#fff" stroke="#000"/><rect x="0.5" y="12.5" width="11" height="4" fill="#fff" stroke="#000"/><path d="M2 2.5h8M2 14.5h8" stroke="#999" stroke-width="1" stroke-dasharray="1 1"/><path d="M3 5l3 3.5l-3 3.5M9 5l-3 3.5l3 3.5" fill="none" stroke="#000" stroke-width="1.2"/><path d="M6 4.8v7.4M4.3 6.5l1.7-1.7l1.7 1.7M4.3 10.5l1.7 1.7l1.7-1.7" fill="none" stroke="#0a8a8a" stroke-width="1.6"/></svg><svg style="position:absolute;left:363px;top:121px;" width="20" height="16" viewBox="0 0 20 16"><path d="M9 2L3 8L9 14M17 2L11 8L17 14" fill="none" stroke="#8a8a8a" stroke-width="2.2" stroke-linejoin="miter"/><path d="M9 2L3 8L9 14M17 2L11 8L17 14" fill="none" stroke="#d8d8d8" stroke-width="0.6" transform="translate(0.8,0.8)" opacity="0.5"/></svg><svg style="position:absolute;left:400px;top:121px;" width="12" height="16" viewBox="0 0 12 16"><path d="M9 2L3 8L9 14" fill="none" stroke="#8a8a8a" stroke-width="2.2" stroke-linejoin="miter"/><path d="M9 2L3 8L9 14" fill="none" stroke="#d8d8d8" stroke-width="0.6" transform="translate(0.8,0.8)" opacity="0.5"/></svg><svg style="position:absolute;left:432px;top:121px;" width="19" height="16" viewBox="0 0 19 16"><path d="M2 12L9 5L16 12" fill="none" stroke="#8a8a8a" stroke-width="2.2" stroke-linejoin="miter"/><path d="M2 12L9 5L16 12" fill="none" stroke="#d8d8d8" stroke-width="0.6" transform="translate(0.8,0.8)" opacity="0.5"/></svg><svg style="position:absolute;left:478px;top:121px;" width="18" height="17" viewBox="0 0 18 17"><circle cx="8.5" cy="8.5" r="7" fill="none" stroke="#8a8a8a" stroke-width="1.8"/><circle cx="8.5" cy="8.5" r="3.8" fill="none" stroke="#8a8a8a" stroke-width="1.8"/><circle cx="8.5" cy="8.5" r="1.5" fill="#b0b0b0"/></svg><svg style="position:absolute;left:512px;top:120px;" width="18" height="18" viewBox="0 0 18 18"><rect x="1" y="1" width="9" height="12" fill="#ccc" stroke="#8a8a8a"/><rect x="6" y="4" width="11" height="13" fill="#ccc" stroke="#8a8a8a"/><path d="M3 4h5M3 7h3M3 10h3" stroke="#8a8a8a" stroke-width="0.8"/><path d="M9 8h5l-4 6h5" fill="none" stroke="#8a8a8a" stroke-width="1.5"/></svg><svg style="position:absolute;left:557px;top:121px;" width="19" height="16" viewBox="0 0 19 16"><path d="M2 5L9 12L16 5" fill="none" stroke="#8a8a8a" stroke-width="2.2" stroke-linejoin="miter"/><path d="M2 5L9 12L16 5" fill="none" stroke="#d8d8d8" stroke-width="0.6" transform="translate(0.8,0.8)" opacity="0.5"/></svg><svg style="position:absolute;left:593px;top:121px;" width="12" height="16" viewBox="0 0 12 16"><path d="M3 2L9 8L3 14" fill="none" stroke="#8a8a8a" stroke-width="2.2" stroke-linejoin="miter"/><path d="M3 2L9 8L3 14" fill="none" stroke="#d8d8d8" stroke-width="0.6" transform="translate(0.8,0.8)" opacity="0.5"/></svg><svg style="position:absolute;left:621px;top:121px;" width="20" height="16" viewBox="0 0 20 16"><path d="M3 2L9 8L3 14M11 2L17 8L11 14" fill="none" stroke="#8a8a8a" stroke-width="2.2" stroke-linejoin="miter"/><path d="M3 2L9 8L3 14M11 2L17 8L11 14" fill="none" stroke="#d8d8d8" stroke-width="0.6" transform="translate(0.8,0.8)" opacity="0.5"/></svg><svg style="position:absolute;left:672px;top:119px;" width="22" height="19" viewBox="0 0 22 19"><rect x="1.5" y="1.5" width="7" height="7" fill="#ddd" stroke="#909090"/><path d="M5 9v4h5M8.5 11l2 2l-2 2" fill="none" stroke="#909090" stroke-width="1.3"/><circle cx="15" cy="12.5" r="3.3" fill="#a0a0a0" stroke="#909090"/></svg><svg style="position:absolute;left:705px;top:119px;" width="22" height="19" viewBox="0 0 22 19"><rect x="1.5" y="1.5" width="7" height="7" fill="#ddd" stroke="#909090"/><path d="M5 9v4h5M8.5 11l2 2l-2 2" fill="none" stroke="#909090" stroke-width="1.3"/><circle cx="14" cy="13" r="3.3" fill="#a0a0a0" stroke="#909090"/><circle cx="18" cy="10.5" r="3.3" fill="#a0a0a0" stroke="#909090"/></svg><svg style="position:absolute;left:738px;top:119px;" width="22" height="19" viewBox="0 0 22 19"><rect x="1.5" y="1.5" width="7" height="7" fill="#ddd" stroke="#909090"/><path d="M5 9v4h5M8.5 11l2 2l-2 2" fill="none" stroke="#909090" stroke-width="1.3"/><rect x="12.5" y="9" width="7" height="7.5" fill="#e8e8e8" stroke="#808080"/><path d="M14 12h4M14 14h4" stroke="#808080"/></svg><div style="left:320px;top:147px;width:24px;height:24px;border-top:1px solid #808080;border-left:1px solid #808080;border-right:1px solid #fff;border-bottom:1px solid #fff;background:#c4c4c4;"></div><svg style="position:absolute;left:326px;top:151px;" width="12" height="17" viewBox="0 0 12 17"><rect x="0.5" y="0.5" width="11" height="4" fill="#fff" stroke="#000"/><rect x="0.5" y="12.5" width="11" height="4" fill="#fff" stroke="#000"/><path d="M2 2.5h8M2 14.5h8" stroke="#999" stroke-width="1" stroke-dasharray="1 1"/><path d="M3 5l3 3.5l-3 3.5M9 5l-3 3.5l3 3.5" fill="none" stroke="#000" stroke-width="1.2"/><path d="M6 4.8v7.4M4.3 6.5l1.7-1.7l1.7 1.7M4.3 10.5l1.7 1.7l1.7-1.7" fill="none" stroke="#0a8a8a" stroke-width="1.6"/></svg><svg style="position:absolute;left:360px;top:151px;" width="17" height="17" viewBox="0 0 17 17"><path d="M3 2h11l-5.5 6z" fill="#fff" stroke="#000" stroke-width="1"/><path d="M8.5 8v5" stroke="#000" stroke-width="1"/><path d="M2 6L15 15M15 6L2 15" stroke="#ff0000" stroke-width="2.2"/><path d="M4 15h9" stroke="#000" stroke-width="1.3"/></svg><svg style="position:absolute;left:396px;top:151px;" width="15" height="15" viewBox="0 0 15 15"><defs><radialGradient id="gl" cx="0.4" cy="0.35" r="0.7"><stop offset="0" stop-color="#8ef"/><stop offset="0.6" stop-color="#1a9ad0"/><stop offset="1" stop-color="#0a3a6a"/></radialGradient></defs><circle cx="7.5" cy="7.5" r="6.8" fill="url(#gl)"/><path d="M5 3q3 1 2 4q-2 1-1 4M9 8q2-1 4 1" fill="none" stroke="#8a7a30" stroke-width="2"/></svg><svg style="position:absolute;left:419px;top:151px;" width="17" height="17" viewBox="0 0 17 17"><path d="M8.5 1.5c4.5 0 7.5 2.5 7.5 6s-3 6-7 6l-3 3v-3.2c-2.5-0.8-4.5-3-4.5-5.8c0-3.5 2.5-6 7-6z" fill="#f4e8b0" stroke="#706040" stroke-width="1"/><path d="M4.5 5.5h8M4 8h9M5 10.5h6" stroke="#4060c0" stroke-width="1"/></svg><svg style="position:absolute;left:443px;top:150px;" width="18" height="18" viewBox="0 0 18 18"><path d="M1.5 5.5h11v11h-11z" fill="#fff" stroke="#000"/><path d="M1.5 5.5l4-4h11l-4 4M16.5 1.5v11l-4 4" fill="#e0e0e0" stroke="#000"/><rect x="3.5" y="8" width="2.2" height="2.2" fill="#000"/><rect x="8" y="8" width="2.2" height="2.2" fill="#000"/><rect x="3.5" y="12.5" width="2.2" height="2.2" fill="#000"/><rect x="8" y="12.5" width="2.2" height="2.2" fill="#000"/></svg><svg style="position:absolute;left:467px;top:150px;" width="18" height="18" viewBox="0 0 18 18"><path d="M1 9l6-4v8z" fill="#fff" stroke="#2030a0" stroke-width="1.2"/><circle cx="7" cy="9" r="2.2" fill="#2030c0"/><path d="M10 9h6M10 5l5-3M10 13l5 3M12 7l4-1M12 11l4 1" stroke="#2050e0" stroke-width="1.2"/><path d="M14 2l2 0M15 15l2 1" stroke="#e0c020" stroke-width="1"/></svg><svg style="position:absolute;left:493px;top:150px;" width="14" height="19" viewBox="0 0 14 19"><text x="7" y="16" text-anchor="middle" font-family="Liberation Sans" font-weight="bold" font-size="18" fill="#20e020" stroke="#004000" stroke-width="0.6">$</text></svg><svg style="position:absolute;left:515px;top:150px;" width="18" height="18" viewBox="0 0 18 18"><path d="M5 15V4l10-2.5v10.5" fill="none" stroke="#a04020" stroke-width="1.8"/><ellipse cx="3.5" cy="15" rx="2.8" ry="2" fill="#e8a060" stroke="#804020" stroke-width="0.7"/><ellipse cx="13.5" cy="12.5" rx="2.8" ry="2" fill="#e8a060" stroke="#804020" stroke-width="0.7"/><path d="M5 5l10-2.5" stroke="#e04040" stroke-width="1.2"/></svg><svg style="position:absolute;left:540px;top:150px;" width="16" height="17" viewBox="0 0 16 17"><rect x="1" y="1" width="14" height="15" fill="#fff" stroke="#000" stroke-width="1.6"/><rect x="3" y="3" width="10" height="3" fill="#2040e0"/><rect x="5" y="8" width="6" height="5" fill="#fff" stroke="#000"/><circle cx="8" cy="10.5" r="1.3" fill="#000"/></svg><svg style="position:absolute;left:565px;top:151px;" width="14" height="17" viewBox="0 0 14 17"><defs><linearGradient id="spk2" x1="0" x2="1"><stop offset="0" stop-color="#606060"/><stop offset="0.5" stop-color="#f0f0f0"/><stop offset="1" stop-color="#909090"/></linearGradient></defs><path d="M1 5.5h3.5l8-5v16l-8-5h-3.5z" fill="url(#spk2)" stroke="#303030" stroke-width="1"/><path d="M4.5 5.5v6" stroke="#303030"/></svg><svg style="position:absolute;left:587px;top:150px;" width="17" height="17" viewBox="0 0 17 17"><path d="M8.5 1v9" stroke="#000" stroke-width="1.6"/><circle cx="8.5" cy="1.8" r="1.5" fill="#e02020"/><path d="M1 12l7.5-3l7.5 3l-7.5 4z" fill="#202020"/><path d="M1 12v1.5l7.5 4l7.5-4v-1.5" fill="#505050"/><circle cx="4" cy="11.5" r="1" fill="#e02020"/></svg><svg style="position:absolute;left:612px;top:150px;" width="16" height="17" viewBox="0 0 16 17"><path d="M1 4l12-3l1 2.5l-12 3z" fill="#202020"/><path d="M3 3.5l2 2M7 2.5l2 2" stroke="#fff" stroke-width="1"/><rect x="1" y="7" width="14" height="9" fill="#202020"/><rect x="3" y="9" width="3" height="2.5" fill="#fff"/><rect x="8" y="9" width="3" height="2.5" fill="#fff"/></svg><svg style="position:absolute;left:635px;top:152px;" width="18" height="15" viewBox="0 0 18 15"><path d="M1 1l7 6.5l-7 6.5z" fill="#101080"/><rect x="1" y="1" width="4" height="13" fill="#101080"/><path d="M17 1l-7 6.5l7 6.5z" fill="#a02020"/><rect x="13" y="1" width="4" height="13" fill="#a02020"/></svg><svg style="position:absolute;left:662px;top:152px;" width="10" height="15" viewBox="0 0 10 15"><path d="M7 1.5q-5 0-5 6t5 6" fill="none" stroke="#202020" stroke-width="2.4"/><path d="M8 2q-2 2-2 5.5t2 5.5" fill="none" stroke="#806040" stroke-width="0.8"/></svg><svg style="position:absolute;left:686px;top:151px;" width="11" height="17" viewBox="0 0 11 17"><circle cx="5.5" cy="2.5" r="2" fill="#000080"/><path d="M2 6.5h5v8h2.5v2h-8v-2h2.5v-6h-2z" fill="#000080"/></svg><svg style="position:absolute;left:708px;top:151px;" width="18" height="17" viewBox="0 0 18 17"><rect x="1" y="1" width="10" height="7" fill="#fff" stroke="#0000e0" stroke-width="1.4"/><rect x="3.5" y="4.5" width="10" height="7" fill="#fff" stroke="#008000" stroke-width="1.4"/><rect x="6" y="8" width="11" height="8" fill="#eee" stroke="#e00000" stroke-width="1.6"/></svg><svg style="position:absolute;left:743px;top:151px;" width="18" height="17" viewBox="0 0 18 17"><text x="9" y="15" text-anchor="middle" font-family="Liberation Serif" font-weight="bold" font-size="17" fill="#000">R</text></svg><svg style="position:absolute;left:783px;top:150px;" width="11" height="18" viewBox="0 0 11 18"><circle cx="5" cy="2.5" r="1.8" fill="#f8d870"/><path d="M2 6.5h5v8h2.5v2h-8v-2h2.5v-6h-2z" fill="#f8d870"/></svg><svg style="position:absolute;left:940px;top:157px;" width="10" height="6" viewBox="0 0 10 6"><path d="M0 0h9l-4.5 5z" fill="#000"/></svg><svg style="position:absolute;left:349px;top:226px;" width="20" height="18" viewBox="0 0 20 18"><rect x="2" y="2" width="16" height="3" fill="#108010"/><path d="M10 5v12" stroke="#2828c8" stroke-width="2.6"/></svg><svg style="position:absolute;left:369px;top:226px;" width="20" height="18" viewBox="0 0 20 18"><path d="M3 2.5h14" stroke="#000" stroke-width="2.2"/><path d="M10 3v10" stroke="#000" stroke-width="1.3"/><path d="M6 11.5l4 5l4-5z" fill="#000"/></svg><svg style="position:absolute;left:550px;top:227px;" width="16" height="16" viewBox="0 0 16 16"><path d="M8 1v8" stroke="#000" stroke-width="1.6"/><circle cx="8" cy="2" r="1.5" fill="#e02020"/><path d="M1 10.5l7-3l7 3l-7 4z" fill="#202020"/><path d="M1 10.5v1.5l7 3.5l7-3.5v-1.5" fill="#606060"/><circle cx="4" cy="10" r="0.9" fill="#e02020"/></svg><svg style="position:absolute;left:570px;top:227px;" width="16" height="16" viewBox="0 0 16 16"><path d="M8 1v8" stroke="#000" stroke-width="1.6"/><circle cx="8" cy="2" r="1.5" fill="#e02020"/><path d="M1 10.5l7-3l7 3l-7 4z" fill="#202020"/><path d="M1 10.5v1.5l7 3.5l7-3.5v-1.5" fill="#606060"/><circle cx="4" cy="10" r="0.9" fill="#e02020"/></svg><svg style="position:absolute;left:352px;top:244px;" width="14" height="18" viewBox="0 0 14 18"><path d="M7 1v12" stroke="#2828c8" stroke-width="2.6"/><path d="M2 11l5 6l5-6z" fill="#2828c8"/></svg><svg style="position:absolute;left:369px;top:244px;" width="20" height="18" viewBox="0 0 20 18"><path d="M3 5 q2.5 -3 5 0 t5 0 t5 0" fill="none" stroke="#000" stroke-width="1.3"/><path d="M3 9.5 q2.5 -3 5 0 t5 0 t5 0" fill="none" stroke="#000" stroke-width="1.3"/><path d="M3 14 q2.5 -3 5 0 t5 0 t5 0" fill="none" stroke="#000" stroke-width="1.3"/></svg><svg style="position:absolute;left:552px;top:245px;" width="13" height="16" viewBox="0 0 13 16"><defs><linearGradient id="spk" x1="0" x2="1"><stop offset="0" stop-color="#606060"/><stop offset="0.5" stop-color="#f0f0f0"/><stop offset="1" stop-color="#909090"/></linearGradient></defs><path d="M1 5h3l7-4.5v15l-7-4.5h-3z" fill="url(#spk)" stroke="#303030" stroke-width="1"/><path d="M4 5v6" stroke="#303030"/></svg><svg style="position:absolute;left:572px;top:245px;" width="13" height="16" viewBox="0 0 13 16"><defs><linearGradient id="spk" x1="0" x2="1"><stop offset="0" stop-color="#606060"/><stop offset="0.5" stop-color="#f0f0f0"/><stop offset="1" stop-color="#909090"/></linearGradient></defs><path d="M1 5h3l7-4.5v15l-7-4.5h-3z" fill="url(#spk)" stroke="#303030" stroke-width="1"/><path d="M4 5v6" stroke="#303030"/></svg><svg style="position:absolute;left:351px;top:262px;" width="16" height="18" viewBox="0 0 16 18"><path d="M5 16c-2-2-4-4-4-6c0-1 1-1.5 2-0.5l1.5 1.5v-8c0-1 1.8-1 1.8 0v5v-6.5c0-1 1.8-1 1.8 0v6.5v-5.5c0-1 1.8-1 1.8 0v5.5v-4c0-1 1.8-1 1.8 0v6c0 3-1 5-2.5 6z" fill="#fff" stroke="#000" stroke-width="1"/></svg><svg style="position:absolute;left:369px;top:262px;" width="20" height="18" viewBox="0 0 20 18"><path d="M3 5 q2.5 -3 5 0 t5 0 t5 0" fill="none" stroke="#000" stroke-width="1.3"/><path d="M3 9.5 q2.5 -3 5 0 t5 0 t5 0" fill="none" stroke="#000" stroke-width="1.3"/><path d="M3 14 q2.5 -3 5 0 t5 0 t5 0" fill="none" stroke="#000" stroke-width="1.3"/></svg><svg style="position:absolute;left:352px;top:280px;" width="14" height="18" viewBox="0 0 14 18"><path d="M7 1v12" stroke="#2828c8" stroke-width="2.6"/><path d="M2 11l5 6l5-6z" fill="#2828c8"/></svg><svg style="position:absolute;left:369px;top:280px;" width="20" height="18" viewBox="0 0 20 18"><path d="M3 5 q2.5 -3 5 0 t5 0 t5 0" fill="none" stroke="#000" stroke-width="1.3"/><path d="M3 9.5 q2.5 -3 5 0 t5 0 t5 0" fill="none" stroke="#000" stroke-width="1.3"/><path d="M3 14 q2.5 -3 5 0 t5 0 t5 0" fill="none" stroke="#000" stroke-width="1.3"/></svg><svg style="position:absolute;left:551px;top:280px;" width="14" height="18" viewBox="0 0 14 18"><text x="7" y="15.5" text-anchor="middle" font-family="Liberation Sans" font-weight="bold" font-size="17" fill="#20e020" stroke="#003000" stroke-width="0.7">$</text></svg><svg style="position:absolute;left:572px;top:281px;" width="13" height="16" viewBox="0 0 13 16"><defs><linearGradient id="spk" x1="0" x2="1"><stop offset="0" stop-color="#606060"/><stop offset="0.5" stop-color="#f0f0f0"/><stop offset="1" stop-color="#909090"/></linearGradient></defs><path d="M1 5h3l7-4.5v15l-7-4.5h-3z" fill="url(#spk)" stroke="#303030" stroke-width="1"/><path d="M4 5v6" stroke="#303030"/></svg><svg style="position:absolute;left:352px;top:298px;" width="14" height="18" viewBox="0 0 14 18"><path d="M7 1v12" stroke="#2828c8" stroke-width="2.6"/><path d="M2 11l5 6l5-6z" fill="#2828c8"/></svg><svg style="position:absolute;left:369px;top:298px;" width="20" height="18" viewBox="0 0 20 18"><path d="M3 5 q2.5 -3 5 0 t5 0 t5 0" fill="none" stroke="#000" stroke-width="1.3"/><path d="M3 9.5 q2.5 -3 5 0 t5 0 t5 0" fill="none" stroke="#000" stroke-width="1.3"/><path d="M3 14 q2.5 -3 5 0 t5 0 t5 0" fill="none" stroke="#000" stroke-width="1.3"/></svg><svg style="position:absolute;left:352px;top:316px;" width="14" height="18" viewBox="0 0 14 18"><path d="M7 1v12" stroke="#3030b0" stroke-width="2.6"/><path d="M2 11l5 6l5-6z" fill="#3030b0"/></svg><svg style="position:absolute;left:369px;top:316px;" width="20" height="18" viewBox="0 0 20 18"><path d="M3 5 q2.5 -3 5 0 t5 0 t5 0" fill="none" stroke="#000" stroke-width="1.3"/><path d="M3 9.5 q2.5 -3 5 0 t5 0 t5 0" fill="none" stroke="#000" stroke-width="1.3"/><path d="M3 14 q2.5 -3 5 0 t5 0 t5 0" fill="none" stroke="#000" stroke-width="1.3"/></svg><svg style="position:absolute;left:312px;top:445px;" width="22" height="22" viewBox="0 0 22 22"><path d="M2 19l2.5-5l12-12l3 3l-12 12z" fill="#f4e030" stroke="#000" stroke-width="1.2"/><path d="M15 3.5l3 3" stroke="#fff" stroke-width="1.5"/><path d="M2 19l2.5-5l2.5 2.5z" fill="#fff" stroke="#000" stroke-width="0.8"/></svg><svg style="position:absolute;left:340px;top:442px;" width="26" height="28" viewBox="0 0 26 28"><path d="M12 5q1-4 6-4q5 0 6 4l-1 2q2 1 2 3l-1 1l1 2l-2 0.5l0.5 2l-2 1l1 3l-3 1l-3-2z" fill="#fff" stroke="#000" stroke-width="0.9"/><path d="M12 5q1-4 6-4q5 0 6 4" fill="#f0f080" stroke="#000" stroke-width="0.8"/><path d="M10 6q-7-1-9 5q-1 5 2 9l-1 3l3 1h6l1-3l1-4l1-3q0-6-4-8z" fill="#000"/><path d="M8 10q3-1 5 1l1 3l2 1l-1 1l1 1l-1 1q0 2-2 2h-1l0 2h-6l1-4q-2-3 1-8z" fill="#fff" stroke="#000" stroke-width="0.8"/><path d="M3 28l2-4l4-1l3 1l-1 4z" fill="#30c8d8" stroke="#000" stroke-width="0.5"/><path d="M11 28l1-4l5-2l4 2l-2 4z" fill="#e02020"/></svg><svg style="position:absolute;left:370px;top:445px;" width="26" height="23" viewBox="0 0 26 23"><rect x="1.5" y="1.5" width="10" height="4.5" fill="#0000e0" stroke="#000" stroke-width="1"/><rect x="1.5" y="6" width="14" height="4.5" fill="#f0f000" stroke="#000" stroke-width="1"/><rect x="1.5" y="10.5" width="22" height="4.5" fill="#f00000" stroke="#000" stroke-width="1"/><rect x="1.5" y="15" width="10" height="5" fill="#008000" stroke="#000" stroke-width="1"/></svg><svg style="position:absolute;left:402px;top:447px;" width="22" height="20" viewBox="0 0 22 20"><rect x="1" y="1" width="11" height="11" fill="#fff" stroke="#000" stroke-width="0.8"/><path d="M2 2h9" stroke="#2040c0" stroke-width="1.2"/><rect x="4.5" y="4" width="11" height="11" fill="#fff" stroke="#000" stroke-width="0.8"/><path d="M5.5 5h9" stroke="#10a0a0" stroke-width="1.2"/><rect x="8" y="7" width="12" height="12" fill="#fff" stroke="#000" stroke-width="1"/><path d="M10 10h8M10 12.5h8M10 15h8M10 17.5h8" stroke="#a01010" stroke-width="1.3"/></svg><svg style="position:absolute;left:434px;top:446px;" width="22" height="22" viewBox="0 0 22 22"><path d="M1.5 5.5h15v13h-15z" fill="#8a8450" stroke="#000" stroke-width="1.2"/><path d="M6 5.5q3-4 6 0z" fill="#f0e040" stroke="#000" stroke-width="0.8"/><rect x="10" y="11" width="10" height="9" fill="#fff" stroke="#1010a0" stroke-width="1.4"/><path d="M12 14h4M12 16.5h6" stroke="#1010a0" stroke-width="1"/></svg><svg style="position:absolute;left:462px;top:445px;" width="22" height="24" viewBox="0 0 22 24"><rect x="1" y="1" width="19" height="21" fill="#fff" stroke="#000" stroke-width="1.5"/><path d="M1 11.5h19" stroke="#000" stroke-width="1.3"/><path d="M2 10.5v-4l1.5-1v-3l1 3l1-2l1 1.5l1.5-1l1 2l2 1l2 2l2 1.5h4v0" fill="#101080"/><path d="M2 10.5h12l-3-2l-2-1.5" fill="#101080"/><path d="M9 21v-3l3-1l2-3l1 2l2-4l1 3l1-2v8z" fill="#901010"/></svg><div style="left:961px;top:0px;width:958px;height:1041px;background:#f5f5f5;"></div><div style="left:961px;top:0px;width:958px;height:1px;background:#2b2b2b;"></div><div style="left:961px;top:1px;width:958px;height:31px;background:#fff;"></div><svg style="position:absolute;left:1800px;top:10px;" width="12" height="12" viewBox="0 0 12 12"><path d="M0 5.5h10" stroke="#808080" stroke-width="1"/></svg><svg style="position:absolute;left:1845px;top:10px;" width="12" height="12" viewBox="0 0 12 12"><rect x="0.5" y="0.5" width="9" height="9" fill="none" stroke="#808080" stroke-width="1"/></svg><svg style="position:absolute;left:1891px;top:10px;" width="12" height="12" viewBox="0 0 12 12"><path d="M0.5 0.5L10.5 10.5M10.5 0.5L0.5 10.5" stroke="#808080" stroke-width="1"/></svg><div style="left:961px;top:32px;width:958px;height:18px;background:#e3e3e3;"></div><div style="left:961px;top:50px;width:958px;height:1px;background:#b4b4b4;"></div><div style="left:961px;top:51px;width:958px;height:1px;background:#fafafa;"></div><div class="t" style="left:970px;top:34.84px;font-size:12px;line-height:12px;color:#333;">Program</div><div class="t" style="left:1028px;top:34.84px;font-size:12px;line-height:12px;color:#333;">Database</div><div class="t" style="left:1091px;top:34.84px;font-size:12px;line-height:12px;color:#333;">Entry</div><div class="t" style="left:1131px;top:34.84px;font-size:12px;line-height:12px;color:#333;">Tools</div><div class="t" style="left:1173px;top:34.84px;font-size:12px;line-height:12px;color:#333;">View</div><div class="t" style="left:1214px;top:34.84px;font-size:12px;line-height:12px;color:#333;">Window</div><div class="t" style="left:1273px;top:34.84px;font-size:12px;line-height:12px;color:#333;">Help</div><div style="left:961px;top:52px;width:958px;height:53px;background:#e1e1e1;"></div><div style="left:961px;top:105px;width:958px;height:1px;background:#c8c8c8;"></div><div style="left:961px;top:106px;width:350px;height:35px;background:#ebebeb;border-top:1px solid #f8f8f8;"></div><div style="left:961px;top:141px;width:350px;height:1px;background:#c8c8c8;"></div><div class="t" style="left:979px;top:119.53px;font-size:10px;line-height:10px;color:#333;letter-spacing:-0.2px;">TABLES</div><div style="left:961px;top:142px;width:350px;height:398px;background:#f5f5f5;"></div><div class="t" style="left:979px;top:158.00px;font-size:13px;line-height:13px;font-weight:bold;color:#555;">Name</div><div style="left:1198px;top:148px;width:1px;height:33px;background:#e4e4e4;"></div><div style="left:971px;top:181px;width:228px;height:20px;background:#e6e6e6;"></div><div class="t" style="left:979px;top:184.84px;font-size:12px;line-height:12px;color:#0a5a3a;">Demo</div><div class="t" style="left:979px;top:204.84px;font-size:12px;line-height:12px;color:#0a5a3a;">Editorial</div><div style="left:971px;top:221px;width:228px;height:1px;background:#e4e4e4;"></div><div class="t" style="left:979px;top:224.84px;font-size:12px;line-height:12px;color:#0a5a3a;">Music</div><div style="left:971px;top:241px;width:228px;height:1px;background:#e4e4e4;"></div><div class="t" style="left:979px;top:244.84px;font-size:12px;line-height:12px;color:#0a5a3a;">News</div><div style="left:971px;top:261px;width:228px;height:1px;background:#e4e4e4;"></div><div class="t" style="left:979px;top:264.84px;font-size:12px;line-height:12px;color:#0a5a3a;">Local Table</div><div style="left:971px;top:281px;width:228px;height:1px;background:#e4e4e4;"></div><div style="left:1311px;top:106px;width:5px;height:868px;background:#dfdfdf;"></div><div style="left:961px;top:540px;width:350px;height:5px;background:#dfdfdf;"></div><div style="left:961px;top:545px;width:350px;height:35px;background:#ebebeb;"></div><div style="left:961px;top:580px;width:350px;height:1px;background:#c8c8c8;"></div><div class="t" style="left:979px;top:558.53px;font-size:10px;line-height:10px;color:#333;letter-spacing:-0.5px;">FILTERS</div><div style="left:961px;top:581px;width:350px;height:24px;background:#e1e1e1;"></div><div style="left:961px;top:581px;width:54px;height:25px;background:#f5f5f5;"></div><div style="left:1014px;top:581px;width:80px;height:24px;background:#e4e4e4;border-left:1px solid #c0c0c0;border-right:1px solid #c0c0c0;"></div><div class="t" style="left:976px;top:586.84px;font-size:12px;line-height:12px;color:#333;">Tree</div><div class="t" style="left:1025px;top:586.84px;font-size:12px;line-height:12px;color:#555;">Definitions</div><div style="left:961px;top:605px;width:350px;height:369px;background:#f5f5f5;"></div><div style="left:1019px;top:613px;width:18px;height:17px;background:#e8e8e8;"></div><svg style="position:absolute;left:1000px;top:613px;" width="18" height="14" viewBox="0 0 18 14"><path d="M0.5 2.5v10h13l3-6h-13l-3 6M0.5 2.5h4l1.5 1.5h7v2.5" fill="none" stroke="#606060" stroke-width="1"/></svg><div class="t" style="left:1021px;top:615.00px;font-size:13px;line-height:13px;color:#333;">All</div><svg style="position:absolute;left:984px;top:633px;" width="6" height="10" viewBox="0 0 6 10"><path d="M1.5 1.5L4.5 4.5L1.5 7.5z" fill="#404040" stroke="#404040" stroke-width="1"/></svg><svg style="position:absolute;left:1000px;top:630px;" width="17" height="14" viewBox="0 0 17 14"><path d="M0.5 1.5h5l1.5 1.5h9.5v9.5h-16z M0.5 4.5h16" fill="none" stroke="#606060" stroke-width="1"/></svg><div class="t" style="left:1021px;top:632.00px;font-size:13px;line-height:13px;color:#333;">Album</div><svg style="position:absolute;left:984px;top:650px;" width="6" height="10" viewBox="0 0 6 10"><path d="M1.5 1.5L4.5 4.5L1.5 7.5z" fill="#404040" stroke="#404040" stroke-width="1"/></svg><svg style="position:absolute;left:1000px;top:647px;" width="17" height="14" viewBox="0 0 17 14"><path d="M0.5 1.5h5l1.5 1.5h9.5v9.5h-16z M0.5 4.5h16" fill="none" stroke="#606060" stroke-width="1"/></svg><div class="t" style="left:1021px;top:649.00px;font-size:13px;line-height:13px;color:#333;">Artist</div><svg style="position:absolute;left:984px;top:667px;" width="6" height="10" viewBox="0 0 6 10"><path d="M1.5 1.5L4.5 4.5L1.5 7.5z" fill="#404040" stroke="#404040" stroke-width="1"/></svg><svg style="position:absolute;left:1000px;top:664px;" width="17" height="14" viewBox="0 0 17 14"><path d="M0.5 1.5h5l1.5 1.5h9.5v9.5h-16z M0.5 4.5h16" fill="none" stroke="#606060" stroke-width="1"/></svg><div class="t" style="left:1021px;top:666.00px;font-size:13px;line-height:13px;color:#333;">Author</div><svg style="position:absolute;left:984px;top:684px;" width="6" height="10" viewBox="0 0 6 10"><path d="M1.5 1.5L4.5 4.5L1.5 7.5z" fill="#404040" stroke="#404040" stroke-width="1"/></svg><svg style="position:absolute;left:1000px;top:681px;" width="17" height="14" viewBox="0 0 17 14"><path d="M0.5 1.5h5l1.5 1.5h9.5v9.5h-16z M0.5 4.5h16" fill="none" stroke="#606060" stroke-width="1"/></svg><div class="t" style="left:1021px;top:683.00px;font-size:13px;line-height:13px;color:#333;">Broadcast date</div><svg style="position:absolute;left:984px;top:701px;" width="6" height="10" viewBox="0 0 6 10"><path d="M1.5 1.5L4.5 4.5L1.5 7.5z" fill="#404040" stroke="#404040" stroke-width="1"/></svg><svg style="position:absolute;left:1000px;top:698px;" width="17" height="14" viewBox="0 0 17 14"><path d="M0.5 1.5h5l1.5 1.5h9.5v9.5h-16z M0.5 4.5h16" fill="none" stroke="#606060" stroke-width="1"/></svg><div class="t" style="left:1021px;top:700.00px;font-size:13px;line-height:13px;color:#333;">Button</div><svg style="position:absolute;left:984px;top:718px;" width="6" height="10" viewBox="0 0 6 10"><path d="M1.5 1.5L4.5 4.5L1.5 7.5z" fill="#404040" stroke="#404040" stroke-width="1"/></svg><svg style="position:absolute;left:1000px;top:715px;" width="17" height="14" viewBox="0 0 17 14"><path d="M0.5 1.5h5l1.5 1.5h9.5v9.5h-16z M0.5 4.5h16" fill="none" stroke="#606060" stroke-width="1"/></svg><div class="t" style="left:1021px;top:717.00px;font-size:13px;line-height:13px;color:#333;">Category</div><svg style="position:absolute;left:984px;top:735px;" width="6" height="10" viewBox="0 0 6 10"><path d="M1.5 1.5L4.5 4.5L1.5 7.5z" fill="#404040" stroke="#404040" stroke-width="1"/></svg><svg style="position:absolute;left:1000px;top:732px;" width="17" height="14" viewBox="0 0 17 14"><path d="M0.5 1.5h5l1.5 1.5h9.5v9.5h-16z M0.5 4.5h16" fill="none" stroke="#606060" stroke-width="1"/></svg><div class="t" style="left:1021px;top:734.00px;font-size:13px;line-height:13px;color:#333;">Class</div><svg style="position:absolute;left:984px;top:752px;" width="6" height="10" viewBox="0 0 6 10"><path d="M1.5 1.5L4.5 4.5L1.5 7.5z" fill="#404040" stroke="#404040" stroke-width="1"/></svg><svg style="position:absolute;left:1000px;top:749px;" width="17" height="14" viewBox="0 0 17 14"><path d="M0.5 1.5h5l1.5 1.5h9.5v9.5h-16z M0.5 4.5h16" fill="none" stroke="#606060" stroke-width="1"/></svg><div class="t" style="left:1021px;top:751.00px;font-size:13px;line-height:13px;color:#333;">Composer</div><svg style="position:absolute;left:984px;top:769px;" width="6" height="10" viewBox="0 0 6 10"><path d="M1.5 1.5L4.5 4.5L1.5 7.5z" fill="#404040" stroke="#404040" stroke-width="1"/></svg><svg style="position:absolute;left:1000px;top:766px;" width="17" height="14" viewBox="0 0 17 14"><path d="M0.5 1.5h5l1.5 1.5h9.5v9.5h-16z M0.5 4.5h16" fill="none" stroke="#606060" stroke-width="1"/></svg><div class="t" style="left:1021px;top:768.00px;font-size:13px;line-height:13px;color:#333;">Correspondent</div><svg style="position:absolute;left:984px;top:786px;" width="6" height="10" viewBox="0 0 6 10"><path d="M1.5 1.5L4.5 4.5L1.5 7.5z" fill="#404040" stroke="#404040" stroke-width="1"/></svg><svg style="position:absolute;left:1000px;top:783px;" width="17" height="14" viewBox="0 0 17 14"><path d="M0.5 1.5h5l1.5 1.5h9.5v9.5h-16z M0.5 4.5h16" fill="none" stroke="#606060" stroke-width="1"/></svg><div class="t" style="left:1021px;top:785.00px;font-size:13px;line-height:13px;color:#333;">Customer</div><svg style="position:absolute;left:984px;top:803px;" width="6" height="10" viewBox="0 0 6 10"><path d="M1.5 1.5L4.5 4.5L1.5 7.5z" fill="#404040" stroke="#404040" stroke-width="1"/></svg><svg style="position:absolute;left:1000px;top:800px;" width="17" height="14" viewBox="0 0 17 14"><path d="M0.5 1.5h5l1.5 1.5h9.5v9.5h-16z M0.5 4.5h16" fill="none" stroke="#606060" stroke-width="1"/></svg><div class="t" style="left:1021px;top:802.00px;font-size:13px;line-height:13px;color:#333;">Date (Creation)</div><svg style="position:absolute;left:984px;top:820px;" width="6" height="10" viewBox="0 0 6 10"><path d="M1.5 1.5L4.5 4.5L1.5 7.5z" fill="#404040" stroke="#404040" stroke-width="1"/></svg><svg style="position:absolute;left:1000px;top:817px;" width="17" height="14" viewBox="0 0 17 14"><path d="M0.5 1.5h5l1.5 1.5h9.5v9.5h-16z M0.5 4.5h16" fill="none" stroke="#606060" stroke-width="1"/></svg><div class="t" style="left:1021px;top:819.00px;font-size:13px;line-height:13px;color:#333;">Date + Time</div><svg style="position:absolute;left:984px;top:837px;" width="6" height="10" viewBox="0 0 6 10"><path d="M1.5 1.5L4.5 4.5L1.5 7.5z" fill="#404040" stroke="#404040" stroke-width="1"/></svg><svg style="position:absolute;left:1000px;top:834px;" width="17" height="14" viewBox="0 0 17 14"><path d="M0.5 1.5h5l1.5 1.5h9.5v9.5h-16z M0.5 4.5h16" fill="none" stroke="#606060" stroke-width="1"/></svg><div class="t" style="left:1021px;top:836.00px;font-size:13px;line-height:13px;color:#333;">Department</div><svg style="position:absolute;left:984px;top:854px;" width="6" height="10" viewBox="0 0 6 10"><path d="M1.5 1.5L4.5 4.5L1.5 7.5z" fill="#404040" stroke="#404040" stroke-width="1"/></svg><svg style="position:absolute;left:1000px;top:851px;" width="17" height="14" viewBox="0 0 17 14"><path d="M0.5 1.5h5l1.5 1.5h9.5v9.5h-16z M0.5 4.5h16" fill="none" stroke="#606060" stroke-width="1"/></svg><div class="t" style="left:1021px;top:853.00px;font-size:13px;line-height:13px;color:#333;">Editor</div><svg style="position:absolute;left:984px;top:871px;" width="6" height="10" viewBox="0 0 6 10"><path d="M1.5 1.5L4.5 4.5L1.5 7.5z" fill="#404040" stroke="#404040" stroke-width="1"/></svg><svg style="position:absolute;left:1000px;top:868px;" width="17" height="14" viewBox="0 0 17 14"><path d="M0.5 1.5h5l1.5 1.5h9.5v9.5h-16z M0.5 4.5h16" fill="none" stroke="#606060" stroke-width="1"/></svg><div class="t" style="left:1021px;top:870.00px;font-size:13px;line-height:13px;color:#333;">First use</div><svg style="position:absolute;left:984px;top:888px;" width="6" height="10" viewBox="0 0 6 10"><path d="M1.5 1.5L4.5 4.5L1.5 7.5z" fill="#404040" stroke="#404040" stroke-width="1"/></svg><svg style="position:absolute;left:1000px;top:885px;" width="17" height="14" viewBox="0 0 17 14"><path d="M0.5 1.5h5l1.5 1.5h9.5v9.5h-16z M0.5 4.5h16" fill="none" stroke="#606060" stroke-width="1"/></svg><div class="t" style="left:1021px;top:887.00px;font-size:13px;line-height:13px;color:#333;">Flags</div><svg style="position:absolute;left:984px;top:905px;" width="6" height="10" viewBox="0 0 6 10"><path d="M1.5 1.5L4.5 4.5L1.5 7.5z" fill="#404040" stroke="#404040" stroke-width="1"/></svg><svg style="position:absolute;left:1000px;top:902px;" width="17" height="14" viewBox="0 0 17 14"><path d="M0.5 1.5h5l1.5 1.5h9.5v9.5h-16z M0.5 4.5h16" fill="none" stroke="#606060" stroke-width="1"/></svg><div class="t" style="left:1021px;top:904.00px;font-size:13px;line-height:13px;color:#333;">Group</div><svg style="position:absolute;left:984px;top:922px;" width="6" height="10" viewBox="0 0 6 10"><path d="M1.5 1.5L4.5 4.5L1.5 7.5z" fill="#404040" stroke="#404040" stroke-width="1"/></svg><svg style="position:absolute;left:1000px;top:919px;" width="17" height="14" viewBox="0 0 17 14"><path d="M0.5 1.5h5l1.5 1.5h9.5v9.5h-16z M0.5 4.5h16" fill="none" stroke="#606060" stroke-width="1"/></svg><div class="t" style="left:1021px;top:921.00px;font-size:13px;line-height:13px;color:#333;">Label</div><svg style="position:absolute;left:984px;top:939px;" width="6" height="10" viewBox="0 0 6 10"><path d="M1.5 1.5L4.5 4.5L1.5 7.5z" fill="#404040" stroke="#404040" stroke-width="1"/></svg><svg style="position:absolute;left:1000px;top:936px;" width="17" height="14" viewBox="0 0 17 14"><path d="M0.5 1.5h5l1.5 1.5h9.5v9.5h-16z M0.5 4.5h16" fill="none" stroke="#606060" stroke-width="1"/></svg><div class="t" style="left:1021px;top:938.00px;font-size:13px;line-height:13px;color:#333;">Language</div><svg style="position:absolute;left:984px;top:956px;" width="6" height="10" viewBox="0 0 6 10"><path d="M1.5 1.5L4.5 4.5L1.5 7.5z" fill="#404040" stroke="#404040" stroke-width="1"/></svg><svg style="position:absolute;left:1000px;top:953px;" width="17" height="14" viewBox="0 0 17 14"><path d="M0.5 1.5h5l1.5 1.5h9.5v9.5h-16z M0.5 4.5h16" fill="none" stroke="#606060" stroke-width="1"/></svg><div class="t" style="left:1021px;top:955.00px;font-size:13px;line-height:13px;color:#333;">Last use</div><svg style="position:absolute;left:984px;top:973px;" width="6" height="10" viewBox="0 0 6 10"><path d="M1.5 1.5L4.5 4.5L1.5 7.5z" fill="#404040" stroke="#404040" stroke-width="1"/></svg><svg style="position:absolute;left:1000px;top:970px;" width="17" height="14" viewBox="0 0 17 14"><path d="M0.5 1.5h5l1.5 1.5h9.5v9.5h-16z M0.5 4.5h16" fill="none" stroke="#606060" stroke-width="1"/></svg><div class="t" style="left:1021px;top:972.00px;font-size:13px;line-height:13px;color:#333;">Level</div><div style="left:961px;top:974px;width:958px;height:42px;background:#e3e3e3;"></div><div style="left:1296px;top:613px;width:15px;height:361px;background:#f0f0f0;"></div><div style="left:1298px;top:629px;width:12px;height:151px;background:#cdcdcd;"></div><svg style="position:absolute;left:1299px;top:616px;" width="10" height="8" viewBox="0 0 10 8"><path d="M1 6L5 2L9 6" fill="none" stroke="#606060" stroke-width="1.5"/></svg><svg style="position:absolute;left:1299px;top:963px;" width="10" height="8" viewBox="0 0 10 8"><path d="M1 2L5 6L9 2" fill="none" stroke="#606060" stroke-width="1.5"/></svg><div class="t" style="left:1031px;top:988.84px;font-size:12px;line-height:12px;color:#333;">Configure</div><div style="left:1316px;top:106px;width:603px;height:35px;background:#ebebeb;border-top:1px solid #f8f8f8;"></div><div style="left:1316px;top:141px;width:603px;height:1px;background:#c8c8c8;"></div><div class="t" style="left:1334px;top:119.53px;font-size:10px;line-height:10px;color:#333;letter-spacing:-0.4px;">ENTRIES</div><div style="left:1506px;top:113px;width:250px;height:21px;background:#fff;border-top:1px solid #b8b8b8;"></div><svg style="position:absolute;left:1741px;top:119px;" width="10" height="6" viewBox="0 0 10 6"><path d="M0 0h9l-4.5 5z" fill="#333"/></svg><div class="t" style="left:1899px;top:117.84px;font-size:12px;line-height:12px;color:#333;">Soft</div><div style="left:1316px;top:142px;width:603px;height:832px;background:#fcfcfc;"></div><div class="t" style="left:1334px;top:158.00px;font-size:13px;line-height:13px;font-weight:bold;color:#555;">Class</div><div class="t" style="left:1382px;top:158.00px;font-size:13px;line-height:13px;font-weight:bold;color:#555;">Title</div><div class="t" style="left:1715px;top:158.00px;font-size:13px;line-height:13px;font-weight:bold;color:#555;">Date</div><div class="t" style="left:1805px;top:158.00px;font-size:13px;line-height:13px;font-weight:bold;color:#555;">Time</div><div style="left:1869px;top:150px;width:35px;height:25px;overflow:hidden;"><div class="t" style="left:0px;top:8.00px;font-size:13px;line-height:13px;font-weight:bold;color:#555;">Durati</div></div><div style="left:1373px;top:148px;width:1px;height:33px;background:#e4e4e4;"></div><div style="left:1705px;top:148px;width:1px;height:33px;background:#e4e4e4;"></div><div style="left:1797px;top:148px;width:1px;height:33px;background:#e4e4e4;"></div><div style="left:1861px;top:148px;width:1px;height:33px;background:#e4e4e4;"></div><svg style="position:absolute;left:1908px;top:161px;" width="10" height="6" viewBox="0 0 10 6"><path d="M0 5h8l-4-4z" fill="#555"/></svg><div style="left:1326px;top:181px;width:593px;height:1px;background:#e4e4e4;"></div><div style="left:1326px;top:201px;width:593px;height:1px;background:#e4e4e4;"></div><div style="left:1382px;top:182px;width:322px;height:20px;overflow:hidden;"><div class="t" style="left:0px;top:3.84px;font-size:12px;line-height:12px;color:#1a1aa0;">INTERNATIONAL FEST ARTS COMPAGNIAN</div></div><div class="t" style="left:1715px;top:186.84px;font-size:12px;line-height:12px;color:#444;">04/06/2016</div><div class="t" style="left:1805px;top:186.84px;font-size:12px;line-height:12px;color:#444;">10:07:29</div><div class="t" style="left:1869px;top:186.84px;font-size:12px;line-height:12px;color:#444;">00:00:04</div><svg style="position:absolute;left:1334px;top:186px;" width="18" height="13" viewBox="0 0 18 13"><path d="M1 4h3l4-3.5v12l-4-3.5h-3z" fill="#555"/><path d="M10 3.5q2 3 0 6M12.5 2q3 4.5 0 9" fill="none" stroke="#555" stroke-width="1.1"/></svg><div style="left:1326px;top:221px;width:593px;height:1px;background:#e4e4e4;"></div><div style="left:1382px;top:202px;width:322px;height:20px;overflow:hidden;"><div class="t" style="left:0px;top:3.84px;font-size:12px;line-height:12px;color:#1a1aa0;">THEMOTH: 20140624: 904: 03: Gang Initiations, My Way, and t</div></div><div class="t" style="left:1715px;top:206.84px;font-size:12px;line-height:12px;color:#444;">07/11/2014</div><div class="t" style="left:1805px;top:206.84px;font-size:12px;line-height:12px;color:#444;">11:37:03</div><div class="t" style="left:1869px;top:206.84px;font-size:12px;line-height:12px;color:#444;">00:01:00</div><svg style="position:absolute;left:1334px;top:206px;" width="18" height="13" viewBox="0 0 18 13"><path d="M1 4h3l4-3.5v12l-4-3.5h-3z" fill="#555"/><path d="M10 3.5q2 3 0 6M12.5 2q3 4.5 0 9" fill="none" stroke="#555" stroke-width="1.1"/></svg><div style="left:1326px;top:222px;width:593px;height:20px;background:#efefef;"></div><div style="left:1326px;top:241px;width:593px;height:1px;background:#e4e4e4;"></div><div style="left:1382px;top:222px;width:322px;height:20px;overflow:hidden;"><div class="t" style="left:0px;top:3.84px;font-size:12px;line-height:12px;color:#1a1aa0;">News File2</div></div><div class="t" style="left:1715px;top:226.84px;font-size:12px;line-height:12px;color:#444;">05/17/2018</div><div class="t" style="left:1805px;top:226.84px;font-size:12px;line-height:12px;color:#444;">16:03:58</div><div class="t" style="left:1869px;top:226.84px;font-size:12px;line-height:12px;color:#444;">00:01:00</div><svg style="position:absolute;left:1334px;top:226px;" width="18" height="13" viewBox="0 0 18 13"><path d="M1 4h3l4-3.5v12l-4-3.5h-3z" fill="#555"/><path d="M10 3.5q2 3 0 6M12.5 2q3 4.5 0 9" fill="none" stroke="#555" stroke-width="1.1"/></svg><div style="left:1326px;top:261px;width:593px;height:1px;background:#e4e4e4;"></div><div style="left:1382px;top:242px;width:322px;height:20px;overflow:hidden;"><div class="t" style="left:0px;top:3.84px;font-size:12px;line-height:12px;color:#1a1aa0;">Avian Influenza USDA</div></div><div class="t" style="left:1715px;top:246.84px;font-size:12px;line-height:12px;color:#444;">03/08/2016</div><div class="t" style="left:1805px;top:246.84px;font-size:12px;line-height:12px;color:#444;">12:52:01</div><div class="t" style="left:1869px;top:246.84px;font-size:12px;line-height:12px;color:#444;">00:01:00</div><svg style="position:absolute;left:1334px;top:246px;" width="18" height="13" viewBox="0 0 18 13"><path d="M1 4h3l4-3.5v12l-4-3.5h-3z" fill="#555"/><path d="M10 3.5q2 3 0 6M12.5 2q3 4.5 0 9" fill="none" stroke="#555" stroke-width="1.1"/></svg><div style="left:1326px;top:281px;width:593px;height:1px;background:#e4e4e4;"></div><div style="left:1382px;top:262px;width:322px;height:20px;overflow:hidden;"><div class="t" style="left:0px;top:3.84px;font-size:12px;line-height:12px;color:#1a1aa0;">Herbie</div></div><div class="t" style="left:1715px;top:266.84px;font-size:12px;line-height:12px;color:#444;">05/05/2016</div><div class="t" style="left:1805px;top:266.84px;font-size:12px;line-height:12px;color:#444;">14:48:39</div><div class="t" style="left:1869px;top:266.84px;font-size:12px;line-height:12px;color:#444;">00:01:30</div><svg style="position:absolute;left:1334px;top:266px;" width="18" height="13" viewBox="0 0 18 13"><path d="M1 4h3l4-3.5v12l-4-3.5h-3z" fill="#555"/><path d="M10 3.5q2 3 0 6M12.5 2q3 4.5 0 9" fill="none" stroke="#555" stroke-width="1.1"/></svg><div style="left:1326px;top:301px;width:593px;height:1px;background:#e4e4e4;"></div><div style="left:1382px;top:282px;width:322px;height:20px;overflow:hidden;"><div class="t" style="left:0px;top:3.84px;font-size:12px;line-height:12px;color:#1a1aa0;">Test News File1</div></div><div class="t" style="left:1715px;top:286.84px;font-size:12px;line-height:12px;color:#444;">05/17/2018</div><div class="t" style="left:1805px;top:286.84px;font-size:12px;line-height:12px;color:#444;">16:04:12</div><div class="t" style="left:1869px;top:286.84px;font-size:12px;line-height:12px;color:#444;">00:01:30</div><svg style="position:absolute;left:1334px;top:286px;" width="18" height="13" viewBox="0 0 18 13"><path d="M1 4h3l4-3.5v12l-4-3.5h-3z" fill="#555"/><path d="M10 3.5q2 3 0 6M12.5 2q3 4.5 0 9" fill="none" stroke="#555" stroke-width="1.1"/></svg><div style="left:1326px;top:321px;width:593px;height:1px;background:#e4e4e4;"></div><div style="left:1382px;top:302px;width:322px;height:20px;overflow:hidden;"><div class="t" style="left:0px;top:3.84px;font-size:12px;line-height:12px;color:#1a1aa0;">What USDA Sees for World Ag Commodities in Coming Year</div></div><div class="t" style="left:1715px;top:306.84px;font-size:12px;line-height:12px;color:#444;">05/21/2018</div><div class="t" style="left:1805px;top:306.84px;font-size:12px;line-height:12px;color:#444;">09:45:05</div><div class="t" style="left:1869px;top:306.84px;font-size:12px;line-height:12px;color:#444;">00:02:30</div><svg style="position:absolute;left:1334px;top:305px;" width="18" height="15" viewBox="0 0 18 15"><rect x="0.5" y="1.5" width="16" height="12" fill="#fff" stroke="#666"/><rect x="2.5" y="4" width="4" height="7" fill="#666"/><path d="M8 4.5h7M8 7.5h7M8 10.5h7" stroke="#666" stroke-width="1.2"/></svg><div style="left:1326px;top:341px;width:593px;height:1px;background:#e4e4e4;"></div><div style="left:1382px;top:322px;width:322px;height:20px;overflow:hidden;"><div class="t" style="left:0px;top:3.84px;font-size:12px;line-height:12px;color:#1a1aa0;">D-2 FIX @ 18:20:35</div></div><div class="t" style="left:1715px;top:326.84px;font-size:12px;line-height:12px;color:#444;">05/07/2018</div><div class="t" style="left:1805px;top:326.84px;font-size:12px;line-height:12px;color:#444;">07:35:39</div><div class="t" style="left:1869px;top:326.84px;font-size:12px;line-height:12px;color:#444;">00:08:24</div><svg style="position:absolute;left:1334px;top:325px;" width="18" height="15" viewBox="0 0 18 15"><rect x="0.5" y="1.5" width="16" height="12" fill="#fff" stroke="#666"/><rect x="2.5" y="4" width="4" height="7" fill="#666"/><path d="M8 4.5h7M8 7.5h7M8 10.5h7" stroke="#666" stroke-width="1.2"/></svg><div style="left:1326px;top:361px;width:593px;height:1px;background:#e4e4e4;"></div><div style="left:1382px;top:342px;width:322px;height:20px;overflow:hidden;"><div class="t" style="left:0px;top:3.84px;font-size:12px;line-height:12px;color:#1a1aa0;">C-1 FIX @ 06:30</div></div><div class="t" style="left:1715px;top:346.84px;font-size:12px;line-height:12px;color:#444;">05/07/2018</div><div class="t" style="left:1805px;top:346.84px;font-size:12px;line-height:12px;color:#444;">07:54:49</div><div class="t" style="left:1869px;top:346.84px;font-size:12px;line-height:12px;color:#444;">00:11:28</div><svg style="position:absolute;left:1334px;top:345px;" width="18" height="15" viewBox="0 0 18 15"><rect x="0.5" y="1.5" width="16" height="12" fill="#fff" stroke="#666"/><rect x="2.5" y="4" width="4" height="7" fill="#666"/><path d="M8 4.5h7M8 7.5h7M8 10.5h7" stroke="#666" stroke-width="1.2"/></svg><div style="left:1326px;top:958px;width:593px;height:16px;background:#f0f0f0;"></div><div style="left:1343px;top:958px;width:361px;height:16px;background:#cdcdcd;"></div><svg style="position:absolute;left:1330px;top:962px;" width="8" height="9" viewBox="0 0 8 9"><path d="M6 1L2 4.5L6 8" fill="none" stroke="#404040" stroke-width="1.5"/></svg><div style="left:961px;top:1016px;width:958px;height:24px;background:#bdbdbd;"></div><div style="left:961px;top:1040px;width:958px;height:1px;background:#1a1a1a;"></div><div class="t" style="left:967px;top:1022.69px;font-size:11px;line-height:11px;color:#333;">User: ADMIN</div><div class="t" style="left:1055px;top:1022.69px;font-size:11px;line-height:11px;color:#333;">DB: DigaSystem</div><div class="t" style="left:1158px;top:1022.69px;font-size:11px;line-height:11px;color:#333;">Table: Demo</div><div class="t" style="left:1244px;top:1022.69px;font-size:11px;line-height:11px;color:#333;">9 Entries</div><div class="t" style="left:1311px;top:1022.69px;font-size:11px;line-height:11px;color:#333;">1 Selected</div><div class="t" style="left:1386px;top:1022.69px;font-size:11px;line-height:11px;color:#333;">Filter: All</div><div style="left:1626px;top:976px;width:273px;height:53px;background:#fff;border:1px solid #bdbdbd;"></div><div style="left:1630px;top:980px;width:44px;height:44px;background:#e6e9ee;border:1px solid #c8cdd4;"></div><svg style="position:absolute;left:1631px;top:981px;" width="42" height="42" viewBox="0 0 42 42"><circle cx="21" cy="16" r="8" fill="#c8ced8"/><path d="M3 42 q2-14 18-14 q16 0 18 14z" fill="#c8ced8"/></svg><div class="t" style="left:1690px;top:997.27px;font-size:11.5px;line-height:11.5px;color:#222;">18 file(s) received successfully</div><svg style="position:absolute;left:1881px;top:998px;" width="10" height="10" viewBox="0 0 10 10"><path d="M1 1L9 9M9 1L1 9" stroke="#808080" stroke-width="2"/></svg><svg style="position:absolute;left:974px;top:66px;" width="24" height="24" viewBox="0 0 24 24"><path d="M6 6 A10.5 10.5 0 1 1 6 18" fill="none" stroke="#5a5a5a" stroke-width="1.5"/><circle cx="4.5" cy="12" r="2.8" fill="none" stroke="#5a5a5a" stroke-width="1.5"/><path d="M7.3 12h9M12.5 12v2.5M15 12v2.5" fill="none" stroke="#5a5a5a" stroke-width="1.5"/></svg><svg style="position:absolute;left:1018px;top:66px;" width="24" height="24" viewBox="0 0 24 24"><path d="M19.5 6.5 A10 10 0 1 0 21.5 12" fill="none" stroke="#5a5a5a" stroke-width="1.5"/><path d="M15.5 3.5l5.5 -1v6z" fill="#5a5a5a"/></svg><svg style="position:absolute;left:1062px;top:66px;" width="24" height="24" viewBox="0 0 24 24"><path d="M1.5 1.5h20l-8 11v10l-4 -4v-6z" fill="none" stroke="#5a5a5a" stroke-width="1.5"/></svg><svg style="position:absolute;left:1106px;top:66px;" width="24" height="24" viewBox="0 0 24 24"><rect x="5.5" y="1.5" width="12" height="5" fill="none" stroke="#5a5a5a" stroke-width="1.5"/><path d="M5.5 17.5h-4v-10h20v10h-4" fill="none" stroke="#5a5a5a" stroke-width="1.5"/><rect x="5.5" y="11.5" width="12" height="10" fill="none" stroke="#5a5a5a" stroke-width="1.5"/><path d="M8 15h7M8 18h7" fill="none" stroke="#5a5a5a" stroke-width="1.5"/><path d="M17 9.5h2" fill="none" stroke="#5a5a5a" stroke-width="1.5"/></svg><svg style="position:absolute;left:1150px;top:66px;" width="24" height="24" viewBox="0 0 24 24"><circle cx="12" cy="12" r="10.5" fill="none" stroke="#5a5a5a" stroke-width="1.5"/><ellipse cx="12" cy="12" rx="4.5" ry="10.5" fill="none" stroke="#5a5a5a" stroke-width="1.5"/><path d="M1.5 12h21M3.5 6.5h17M3.5 17.5h17M12 1.5v21" fill="none" stroke="#5a5a5a" stroke-width="1.5"/></svg><svg style="position:absolute;left:1194px;top:66px;" width="24" height="24" viewBox="0 0 24 24"><path d="M2 4.5h20" stroke="#5a5a5a" stroke-width="2"/><path d="M8 2h8" stroke="#5a5a5a" stroke-width="2"/><path d="M4 6.5l1.5 15.5h13l1.5-15.5" fill="none" stroke="#5a5a5a" stroke-width="1.5"/><path d="M9 9v10M12 9v10M15 9v10" fill="none" stroke="#5a5a5a" stroke-width="1.5"/></svg><div style="left:1238px;top:66px;width:1px;height:22px;background:#909090;"></div><div style="left:1434px;top:66px;width:1px;height:22px;background:#909090;"></div><div style="left:1542px;top:66px;width:1px;height:22px;background:#909090;"></div><div style="left:1606px;top:66px;width:1px;height:22px;background:#909090;"></div><svg style="position:absolute;left:1258px;top:66px;" width="24" height="24" viewBox="0 0 24 24"><rect x="10.5" y="1.5" width="6" height="12" rx="3" fill="none" stroke="#5a5a5a" stroke-width="1.5"/><path d="M7.5 9.5a6 6 0 0 0 12 0M13.5 15.5v6M9.5 21.5h8M1 17.5h7M4.5 14v7" fill="none" stroke="#5a5a5a" stroke-width="1.5"/></svg><svg style="position:absolute;left:1302px;top:66px;" width="24" height="24" viewBox="0 0 24 24"><path d="M8.5 1.5h13v21h-13v-4" fill="none" stroke="#5a5a5a" stroke-width="1.5"/><path d="M8.5 1.5v10" fill="none" stroke="#5a5a5a" stroke-width="1.5"/><path d="M12 11l3-7.5l3 7.5M13.2 8h3.6" fill="none" stroke="#5a5a5a" stroke-width="1.5"/><path d="M12 14.5h7M12 18h7M1 17.5h7M4.5 14v7" fill="none" stroke="#5a5a5a" stroke-width="1.5"/></svg><svg style="position:absolute;left:1346px;top:66px;" width="24" height="24" viewBox="0 0 24 24"><path d="M8.5 1.5h13v21h-13" fill="none" stroke="#5a5a5a" stroke-width="1.5" stroke-dasharray="2.2 2"/><path d="M8.5 1.5v11" fill="none" stroke="#5a5a5a" stroke-width="1.5" stroke-dasharray="2.2 2"/><path d="M1 17.5h7M4.5 14v7" fill="none" stroke="#5a5a5a" stroke-width="1.5"/></svg><svg style="position:absolute;left:1390px;top:66px;" width="24" height="24" viewBox="0 0 24 24"><path d="M2 12v-10h6l1.5 1.5h12v17h-11" fill="none" stroke="#5a5a5a" stroke-width="1.5"/><path d="M2 3.5h7" stroke="#5a5a5a" stroke-width="2"/><path d="M1 17.5h7M4.5 14v7" fill="none" stroke="#5a5a5a" stroke-width="1.5"/></svg><svg style="position:absolute;left:1454px;top:66px;" width="24" height="24" viewBox="0 0 24 24"><circle cx="12" cy="12" r="10.5" fill="none" stroke="#5a5a5a" stroke-width="1.5"/><path d="M10 8v8l6-4z" fill="#5a5a5a"/></svg><svg style="position:absolute;left:1497px;top:66px;" width="24" height="24" viewBox="0 0 24 24"><path d="M12.5 1.5h-11v21h11v-2" fill="none" stroke="#5a5a5a" stroke-width="1.5"/><path d="M4 12h5M4 16h7M4 19.5h6M5 8.5h3" fill="none" stroke="#5a5a5a" stroke-width="1.5"/><path d="M12 14l9-10l2 2l-9 10l-3 1z" fill="none" stroke="#5a5a5a" stroke-width="1.5"/></svg><svg style="position:absolute;left:1562px;top:66px;" width="24" height="24" viewBox="0 0 24 24"><rect x="1.5" y="3.5" width="21" height="6" fill="none" stroke="#5a5a5a" stroke-width="1.5"/><rect x="1.5" y="13.5" width="21" height="6" fill="none" stroke="#5a5a5a" stroke-width="1.5"/><path d="M12 0v24" fill="none" stroke="#5a5a5a" stroke-width="1.5"/><path d="M12 9.5l5-6M12 13.5l5 6" fill="none" stroke="#5a5a5a" stroke-width="1.5"/></svg><svg style="position:absolute;left:1043px;top:111px;" width="26" height="24" viewBox="0 0 26 24"><circle cx="10" cy="10" r="6.5" fill="none" stroke="#5a5a5a" stroke-width="1.5"/><circle cx="16" cy="10" r="6.5" fill="none" stroke="#5a5a5a" stroke-width="1.5"/><path d="M6 15l-5 5" stroke="#5a5a5a" stroke-width="2.2"/><path d="M11 15l-4 5" stroke="#5a5a5a" stroke-width="2"/></svg><svg style="position:absolute;left:1286px;top:116px;" width="14" height="16" viewBox="0 0 14 16"><path d="M6 3l-4.5 4.5l4.5 4.5M11 3l-4.5 4.5l4.5 4.5" fill="none" stroke="#5a5a5a" stroke-width="1.5"/></svg><svg style="position:absolute;left:1287px;top:555px;" width="14" height="16" viewBox="0 0 14 16"><path d="M6 3l-4.5 4.5l4.5 4.5M11 3l-4.5 4.5l4.5 4.5" fill="none" stroke="#5a5a5a" stroke-width="1.5"/></svg><svg style="position:absolute;left:1396px;top:113px;" width="20" height="20" viewBox="0 0 20 20"><circle cx="10" cy="10" r="8.5" fill="none" stroke="#5a5a5a" stroke-width="1.5"/><circle cx="10" cy="5.5" r="1.3" fill="#5a5a5a"/><path d="M8 8.5h2.5v6.5M8 15h5" fill="none" stroke="#5a5a5a" stroke-width="1.5"/></svg><svg style="position:absolute;left:1436px;top:113px;" width="20" height="20" viewBox="0 0 20 20"><path d="M1.5 3.5v12h17v-10h-9l-2-2z" fill="none" stroke="#5a5a5a" stroke-width="1.5"/><path d="M1.5 5.5h17" fill="none" stroke="#5a5a5a" stroke-width="1.5"/></svg><svg style="position:absolute;left:1768px;top:112px;" width="22" height="22" viewBox="0 0 22 22"><circle cx="12" cy="9" r="6.8" fill="none" stroke="#5a5a5a" stroke-width="1.5"/><path d="M7 14l-5.5 5.5" stroke="#5a5a5a" stroke-width="2.2"/></svg><svg style="position:absolute;left:1800px;top:112px;" width="22" height="22" viewBox="0 0 22 22"><circle cx="11" cy="11" r="6" fill="none" stroke="#5a5a5a" stroke-width="2.6"/><path d="M11 2v3M11 17v3M2 11h3M17 11h3M4.6 4.6l2.1 2.1M15.3 15.3l2.1 2.1M4.6 17.4l2.1-2.1M15.3 6.7l2.1-2.1" stroke="#5a5a5a" stroke-width="2.6"/></svg><svg style="position:absolute;left:1872px;top:113px;" width="20" height="22" viewBox="0 0 20 22"><path d="M3 6h14M8 3l9-2" fill="none" stroke="#5a5a5a" stroke-width="1.5"/><path d="M4 7l1 12h10l1-12" fill="none" stroke="#5a5a5a" stroke-width="1.5"/><path d="M8 10v6M10 10v6M12 10v6" fill="none" stroke="#5a5a5a" stroke-width="1.5"/></svg><svg style="position:absolute;left:1002px;top:984px;" width="22" height="22" viewBox="0 0 22 22"><circle cx="10.5" cy="10" r="6" fill="none" stroke="#5a5a5a" stroke-width="1.5"/><rect x="9" y="1.5" width="3" height="3.2" fill="#5a5a5a" transform="rotate(0 10.5 10)"/><rect x="9" y="1.5" width="3" height="3.2" fill="#5a5a5a" transform="rotate(45 10.5 10)"/><rect x="9" y="1.5" width="3" height="3.2" fill="#5a5a5a" transform="rotate(90 10.5 10)"/><rect x="9" y="1.5" width="3" height="3.2" fill="#5a5a5a" transform="rotate(135 10.5 10)"/><rect x="9" y="1.5" width="3" height="3.2" fill="#5a5a5a" transform="rotate(180 10.5 10)"/><rect x="9" y="1.5" width="3" height="3.2" fill="#5a5a5a" transform="rotate(225 10.5 10)"/><rect x="9" y="1.5" width="3" height="3.2" fill="#5a5a5a" transform="rotate(270 10.5 10)"/><rect x="9" y="1.5" width="3" height="3.2" fill="#5a5a5a" transform="rotate(315 10.5 10)"/><rect x="0" y="12" width="7" height="8" fill="#e3e3e3"/><path d="M0.5 16.5h6M3.5 13.5v6" stroke="#5a5a5a" stroke-width="1.3"/></svg><div style="left:1895px;top:937px;width:24px;height:37px;background:#fff;border:1px solid #c8c8c8;border-right:none;border-radius:2px 0 0 2px;"></div><svg style="position:absolute;left:1899px;top:943px;" width="20" height="20" viewBox="0 0 20 20"><rect x="0" y="0" width="20" height="20" fill="#0e8ee9"/><circle cx="10" cy="10" r="8.5" fill="#fff"/><path d="M3.5 10h13M6.5 7.5l-3 2.5l3 2.5M13.5 7.5l3 2.5l-3 2.5" stroke="#2a7ad9" stroke-width="1.8" fill="none"/></svg><svg style="position:absolute;left:1898px;top:954px;" width="21" height="44" viewBox="0 0 21 44"><circle cx="22" cy="22" r="20.5" fill="#000" stroke="#4a7a8a" stroke-width="1.2"/><path d="M18 16l-5 6l5 6" fill="none" stroke="#777" stroke-width="2.5"/></svg><svg style="position:absolute;left:14px;top:61px;" width="25" height="25" viewBox="0 0 25 25"><rect x="0.5" y="0.5" width="23" height="23" fill="#fff" stroke="#000" stroke-width="1"/><rect x="3" y="3" width="8" height="15" fill="#000"/><rect x="12" y="3" width="9" height="15" fill="#000"/><rect x="3" y="20" width="4" height="2" fill="#000"/><rect x="17" y="20" width="4" height="2" fill="#000"/></svg><svg style="position:absolute;left:53px;top:61px;" width="25" height="25" viewBox="0 0 25 25"><rect x="0.5" y="0.5" width="23" height="23" fill="#fff" stroke="#000" stroke-width="1"/><rect x="3" y="3" width="18" height="7" fill="#000"/><rect x="3" y="11" width="18" height="7" fill="#000"/><rect x="3" y="20" width="4" height="2" fill="#000"/><rect x="17" y="20" width="4" height="2" fill="#000"/></svg><svg style="position:absolute;left:92px;top:61px;" width="25" height="25" viewBox="0 0 25 25"><rect x="0.5" y="0.5" width="23" height="23" fill="#000" stroke="#000"/><rect x="2.5" y="2.5" width="19" height="19" fill="none" stroke="#fff" stroke-width="1"/><path d="M4 4 h6 v13 h-3 v-1" fill="none" stroke="#fff" stroke-width="1"/><path d="M4 4 l4 2 v14 l-4-3z" fill="#fff"/><path d="M12 10.5 l3-3 v2 h5 v2.5 h-5 v2z" fill="#fff"/></svg><svg style="position:absolute;left:131px;top:61px;" width="25" height="25" viewBox="0 0 25 25"><rect x="0.5" y="0.5" width="23" height="23" fill="#000" stroke="#000"/><rect x="2.5" y="2.5" width="19" height="19" fill="none" stroke="#fff" stroke-width="1"/><path d="M5 12.5 h10" stroke="#fff" stroke-width="1.6"/><rect x="15.5" y="9.5" width="3.5" height="5.5" fill="none" stroke="#fff" stroke-width="1.2"/><path d="M6 13v2.5M8 13v2" stroke="#fff" stroke-width="1.3"/></svg><svg style="position:absolute;left:170px;top:61px;" width="25" height="25" viewBox="0 0 25 25"><rect x="0.5" y="0.5" width="23" height="23" fill="#000" stroke="#000"/><rect x="2.5" y="2.5" width="19" height="19" fill="none" stroke="#fff" stroke-width="1"/><path d="M5.5 12 q0-6 6.5-6 q6 0 6 5" fill="none" stroke="#fff" stroke-width="1.3"/><path d="M3.5 10.5h4l-2 3z" fill="#fff"/><path d="M5 16.5h10" stroke="#fff" stroke-width="1.6"/><path d="M16 16.5h1M18 16.5h1M20 16.5h0.8" stroke="#fff" stroke-width="1.6"/></svg><svg style="position:absolute;left:209px;top:61px;" width="25" height="25" viewBox="0 0 25 25"><rect x="0.5" y="0.5" width="23" height="23" fill="#808080" stroke="#a0a0a0"/><rect x="2" y="2" width="20" height="20" fill="none" stroke="#c0c0c0" stroke-width="1"/><path d="M18.5 12 q0-6 -6.5-6 q-6 0 -6 5" fill="none" stroke="#e0e0e0" stroke-width="1.3"/><path d="M20.5 10.5h-4l2 3z" fill="#e0e0e0"/><path d="M9 16.5h10" stroke="#e0e0e0" stroke-width="1.6"/><path d="M4.5 16.5h1M6.5 16.5h1" stroke="#e0e0e0" stroke-width="1.6"/></svg><svg style="position:absolute;left:248px;top:61px;" width="25" height="25" viewBox="0 0 25 25"><rect x="0.5" y="0.5" width="23" height="23" fill="#4472c4" stroke="#6a9ae0"/><path d="M4 9h3.5l5-4.5v15l-5-4.5h-3.5z" fill="#fff"/><path d="M15 9q1.5 3 0 6M17.5 7q2.5 5 0 10" fill="none" stroke="#fff" stroke-width="1.2"/></svg><svg style="position:absolute;left:287px;top:61px;" width="25" height="25" viewBox="0 0 25 25"><rect x="0.5" y="0.5" width="23" height="23" fill="#000" stroke="#000"/><rect x="2" y="2" width="20" height="20" fill="none" stroke="#fff" stroke-width="0.8"/><path d="M6 6h12" stroke="#fff" stroke-width="1.5"/><path d="M10.5 4.5h3" stroke="#fff" stroke-width="1"/><path d="M7 7.5h10v12h-10z" fill="none" stroke="#fff" stroke-width="1.2"/><path d="M9.5 9v9M12 9v9M14.5 9v9" stroke="#fff" stroke-width="1.2"/></svg><svg style="position:absolute;left:326px;top:61px;" width="25" height="25" viewBox="0 0 25 25"><rect x="0.5" y="0.5" width="23" height="23" fill="#fff" stroke="#000" stroke-width="1.2"/><rect x="2" y="2" width="3" height="8" fill="#000"/><rect x="19" y="2" width="3" height="8" fill="#000"/><rect x="6" y="1" width="12" height="11" fill="#fff" stroke="#000" stroke-width="1"/><path d="M8 3.5h4M8 5.5h6M8 7.5h6M8 9.5h4" stroke="#000" stroke-width="1"/><path d="M1 12h22M1 19h22" stroke="#000" stroke-width="1.3"/><rect x="19" y="20" width="2" height="2" fill="#000"/></svg><svg style="position:absolute;left:365px;top:61px;" width="25" height="25" viewBox="0 0 25 25"><rect x="0.5" y="0.5" width="24" height="24" fill="#dde6f4" stroke="#2a50a0" stroke-width="1.2"/><rect x="1.5" y="1.5" width="22" height="22" fill="none" stroke="#fff" stroke-width="0.8"/><path d="M7 13.5h10.5q0.5-6-5.5-6q-5.5 0-5.5 6q0 6 5.5 6q3 0 4.5-2.5" fill="none" stroke="#3aa0e8" stroke-width="3"/><ellipse cx="12.5" cy="12.5" rx="10.5" ry="3.8" transform="rotate(-38 12.5 12.5)" fill="none" stroke="#f0b020" stroke-width="1.4"/></svg><svg style="position:absolute;left:404px;top:61px;" width="25" height="25" viewBox="0 0 25 25"><rect x="0.5" y="0.5" width="23" height="23" fill="#fff" stroke="#6a88b0"/><rect x="2" y="2" width="20" height="20" fill="#6a88b0"/><rect x="6" y="5" width="12" height="15" fill="#fff"/><path d="M7 7h6M7 9.5h10M7 12h8M7 14.5h8" stroke="#6a88b0" stroke-width="1.1"/><path d="M14 17L23 6" stroke="#fff" stroke-width="1.5"/><rect x="23" y="5" width="1" height="2" fill="#f0f"/></svg><svg style="position:absolute;left:443px;top:61px;" width="25" height="25" viewBox="0 0 25 25"><rect x="0.5" y="0.5" width="23" height="23" fill="#fff" stroke="#6a88b0"/><rect x="2" y="2" width="20" height="20" fill="#6a88b0"/><rect x="4" y="3" width="12" height="15" fill="#fff"/><rect x="6.5" y="6" width="12" height="15" fill="#fff" stroke="#6a88b0" stroke-width="0.8"/><path d="M8 8h6M8 10.5h9M8 13h8M8 15.5h8" stroke="#6a88b0" stroke-width="1.1"/><path d="M17 17L24 8" stroke="#fff" stroke-width="1.5"/></svg><svg style="position:absolute;left:482px;top:61px;" width="25" height="25" viewBox="0 0 25 25"><rect x="0.5" y="0.5" width="23" height="23" fill="#fff" stroke="#8a1a1a" stroke-width="1.2"/><rect x="2" y="2" width="20" height="10" fill="#b02020"/><rect x="2" y="12" width="20" height="10" fill="#2a3aa0"/><path d="M8 2v20M16 2v20" stroke="#fff" stroke-width="0.8"/><text x="12" y="17" text-anchor="middle" font-family="Liberation Sans" font-weight="bold" font-size="10" fill="#fff" textLength="21" lengthAdjust="spacingAndGlyphs">DBM</text></svg><svg style="position:absolute;left:521px;top:61px;" width="25" height="25" viewBox="0 0 25 25"><rect x="0.5" y="0.5" width="23" height="23" fill="#fff" stroke="#9090c8"/><rect x="2" y="2" width="20" height="20" fill="#9090c8"/><rect x="6" y="5" width="12" height="15" fill="#fff"/><path d="M7 7h4M7 9.5h9M7 12h8M7 14.5h8" stroke="#9090c8" stroke-width="1"/><path d="M11 22l4-6l3-1l3-1.5l3 1v3l-4 4z" fill="#7a7a7a"/><circle cx="13" cy="20.5" r="1.2" fill="#c0c0c0"/><circle cx="19" cy="20.5" r="1.2" fill="#c0c0c0"/></svg><svg style="position:absolute;left:560px;top:61px;" width="25" height="25" viewBox="0 0 25 25"><rect x="0.5" y="0.5" width="23" height="23" fill="#fff" stroke="#808080" stroke-width="1"/><rect x="2" y="2" width="20" height="20" fill="#808080"/><rect x="5" y="3" width="14" height="18" fill="#f0f0f0"/><path d="M5 7h14" stroke="#808080" stroke-width="1"/><text x="12" y="18" text-anchor="middle" font-family="Liberation Sans" font-size="9" fill="#555">31</text></svg><svg style="position:absolute;left:599px;top:61px;" width="25" height="25" viewBox="0 0 25 25"><rect x="0.5" y="0.5" width="24" height="23" fill="#2e4a7a" stroke="#2e4a7a"/><rect x="1.5" y="1" width="22" height="2.5" fill="#7a98c8"/><rect x="2" y="4" width="21" height="18" fill="none" stroke="#fff" stroke-width="0.7"/><rect x="4.5" y="4.5" width="2.5" height="1.8" fill="#c8c0b0"/><rect x="8.0" y="4.5" width="2.5" height="1.8" fill="#c8c0b0"/><rect x="11.5" y="4.5" width="2.5" height="1.8" fill="#c8c0b0"/><rect x="15.0" y="4.5" width="2.5" height="1.8" fill="#c8c0b0"/><rect x="18.5" y="4.5" width="2.5" height="1.8" fill="#c8c0b0"/><rect x="4.5" y="7.4" width="2.5" height="1.8" fill="#c8c0b0"/><rect x="8.0" y="7.4" width="2.5" height="1.8" fill="#fff"/><rect x="11.5" y="7.4" width="2.5" height="1.8" fill="#fff"/><rect x="15.0" y="7.4" width="2.5" height="1.8" fill="#fff"/><rect x="18.5" y="7.4" width="2.5" height="1.8" fill="#fff"/><rect x="4.5" y="10.3" width="2.5" height="1.8" fill="#c8c0b0"/><rect x="8.0" y="10.3" width="2.5" height="1.8" fill="#fff"/><rect x="11.5" y="10.3" width="2.5" height="1.8" fill="#fff"/><rect x="15.0" y="10.3" width="2.5" height="1.8" fill="#fff"/><rect x="18.5" y="10.3" width="2.5" height="1.8" fill="#fff"/><rect x="4.5" y="13.2" width="2.5" height="1.8" fill="#c8c0b0"/><rect x="8.0" y="13.2" width="2.5" height="1.8" fill="#fff"/><rect x="11.5" y="13.2" width="2.5" height="1.8" fill="#fff"/><rect x="15.0" y="13.2" width="2.5" height="1.8" fill="#fff"/><rect x="18.5" y="13.2" width="2.5" height="1.8" fill="#fff"/><rect x="4.5" y="16.1" width="2.5" height="1.8" fill="#c8c0b0"/><rect x="8.0" y="16.1" width="2.5" height="1.8" fill="#fff"/><rect x="11.5" y="16.1" width="2.5" height="1.8" fill="#fff"/><rect x="15.0" y="16.1" width="2.5" height="1.8" fill="#0000ff"/><rect x="18.5" y="16.1" width="2.5" height="1.8" fill="#fff"/><rect x="4.5" y="19.0" width="2.5" height="1.8" fill="#c8c0b0"/><rect x="8.0" y="19.0" width="2.5" height="1.8" fill="#fff"/><rect x="11.5" y="19.0" width="2.5" height="1.8" fill="#fff"/><rect x="15.0" y="19.0" width="2.5" height="1.8" fill="#fff"/><rect x="18.5" y="19.0" width="2.5" height="1.8" fill="#fff"/></svg><div style="left:1px;top:1020px;width:957px;height:19px;background:#f0f0f0;"></div><div style="left:1px;top:1019px;width:957px;height:1px;background:#fff;"></div><div class="t" style="left:3px;top:1024.84px;font-size:12px;line-height:12px;color:#000;">Usr: ADMIN</div><div style="left:71px;top:1022px;width:1px;height:16px;background:#d8d8d8;"></div><div class="t" style="left:76px;top:1024.84px;font-size:12px;line-height:12px;color:#000;">Pending operations: 2</div><div style="left:209px;top:1022px;width:1px;height:16px;background:#d8d8d8;"></div><div class="t" style="left:214px;top:1024.84px;font-size:12px;line-height:12px;color:#000;">State: Idle</div><svg style="position:absolute;left:949px;top:1029px;" width="9" height="9" viewBox="0 0 9 9"><rect x="6" y="0" width="2" height="2" fill="#a0a0a0"/><rect x="3" y="3" width="2" height="2" fill="#a0a0a0"/><rect x="6" y="3" width="2" height="2" fill="#a0a0a0"/><rect x="0" y="6" width="2" height="2" fill="#a0a0a0"/><rect x="3" y="6" width="2" height="2" fill="#a0a0a0"/><rect x="6" y="6" width="2" height="2" fill="#a0a0a0"/></svg><svg style="position:absolute;left:8px;top:6px;" width="18" height="18" viewBox="0 0 18 18"><circle cx="5" cy="5" r="4.2" fill="#fff" stroke="#666" stroke-width="1.2"/><path d="M5 2.5v2.5h2" stroke="#666" stroke-width="0.8" fill="none"/><rect x="9" y="3" width="6" height="5" fill="#8fd0e0" stroke="#666" stroke-width="0.6"/><rect x="9" y="8" width="6" height="3" fill="#3a8aa0"/><rect x="9" y="11" width="6" height="4" fill="#f0c090"/><rect x="3" y="10" width="6" height="6" fill="#fff" stroke="#666" stroke-width="1"/><rect x="5" y="12" width="2" height="2" fill="#444"/></svg><svg style="position:absolute;left:672px;top:0px;" width="576" height="28" viewBox="0 0 576 28"><defs><linearGradient id="rg" x1="0" y1="0" x2="0" y2="1">
<stop offset="0" stop-color="#a8c4ea"/><stop offset="0.08" stop-color="#8fb0e0"/><stop offset="0.42" stop-color="#5a88c8"/><stop offset="0.46" stop-color="#2c5898"/><stop offset="0.92" stop-color="#2a5594"/><stop offset="0.96" stop-color="#6a94d0"/><stop offset="1" stop-color="#444"/></linearGradient></defs>
<path d="M0 0 L575 0 L549.5 27 L26 27 Z" fill="url(#rg)"/>
<path d="M0.5 0 L26.5 26.5 L549 26.5 L575 0" fill="none" stroke="#404040" stroke-width="1"/></svg><div style="left:702px;top:1px;width:22px;height:20px;border:1px solid #4a90e0;background:rgba(80,150,230,0.25);"></div><svg style="position:absolute;left:706px;top:5px;" width="14" height="12" viewBox="0 0 14 12"><path d="M0.5 5.5h5" stroke="#fff" stroke-width="1.5"/><path d="M4 1.5v8M5 4h6M11 2v6" stroke="#fff" stroke-width="2.2"/></svg><svg style="position:absolute;left:730px;top:4px;" width="12" height="14" viewBox="0 0 12 14"><rect x="0" y="10" width="2.2" height="3.5" fill="#fff"/><rect x="3.5" y="7" width="2.2" height="6.5" fill="#fff"/><rect x="7" y="4" width="2.2" height="9.5" fill="#fff"/><rect x="10" y="1" width="2" height="12.5" fill="#fff"/></svg><svg style="position:absolute;left:838px;top:10px;" width="110" height="12" viewBox="0 0 110 12"><path d="M2 5.5h10" stroke="#1e4070" stroke-width="1"/><rect x="47.5" y="0.5" width="9" height="9" fill="none" stroke="#1e4070"/><path d="M92.5 0.5l9 9M101.5 0.5l-9 9" stroke="#1e4070" stroke-width="1"/></svg><svg style="position:absolute;left:966px;top:8px;" width="20" height="20" viewBox="0 0 20 20"><circle cx="10" cy="8" r="7" fill="#1c4a90"/></svg><div class="t" style="left:989px;top:11.00px;font-size:13px;line-height:13px;color:#1c4a90;">DigaSystem Database Manager</div><div style="left:960px;top:0px;width:1px;height:27px;background:rgba(20,40,80,0.5);"></div><div class="t" style="left:941px;top:8.27px;font-size:11.5px;line-height:11.5px;color:#fff;letter-spacing:-0.3px;">10.0.6.7</div><svg style="position:absolute;left:1155px;top:8px;" width="80" height="16" viewBox="0 0 80 16"><path d="M1 7h7" stroke="#fff" stroke-width="2.2"/><rect x="20" y="5" width="6.5" height="5.5" fill="none" stroke="#fff" stroke-width="1.6"/><path d="M22.5 5v-2.5h6v5.5h-2" fill="none" stroke="#fff" stroke-width="1.6"/><path d="M44 1.5l7 6M51 1.5l-7 6" stroke="#fff" stroke-width="2.3"/></svg></body></html>
